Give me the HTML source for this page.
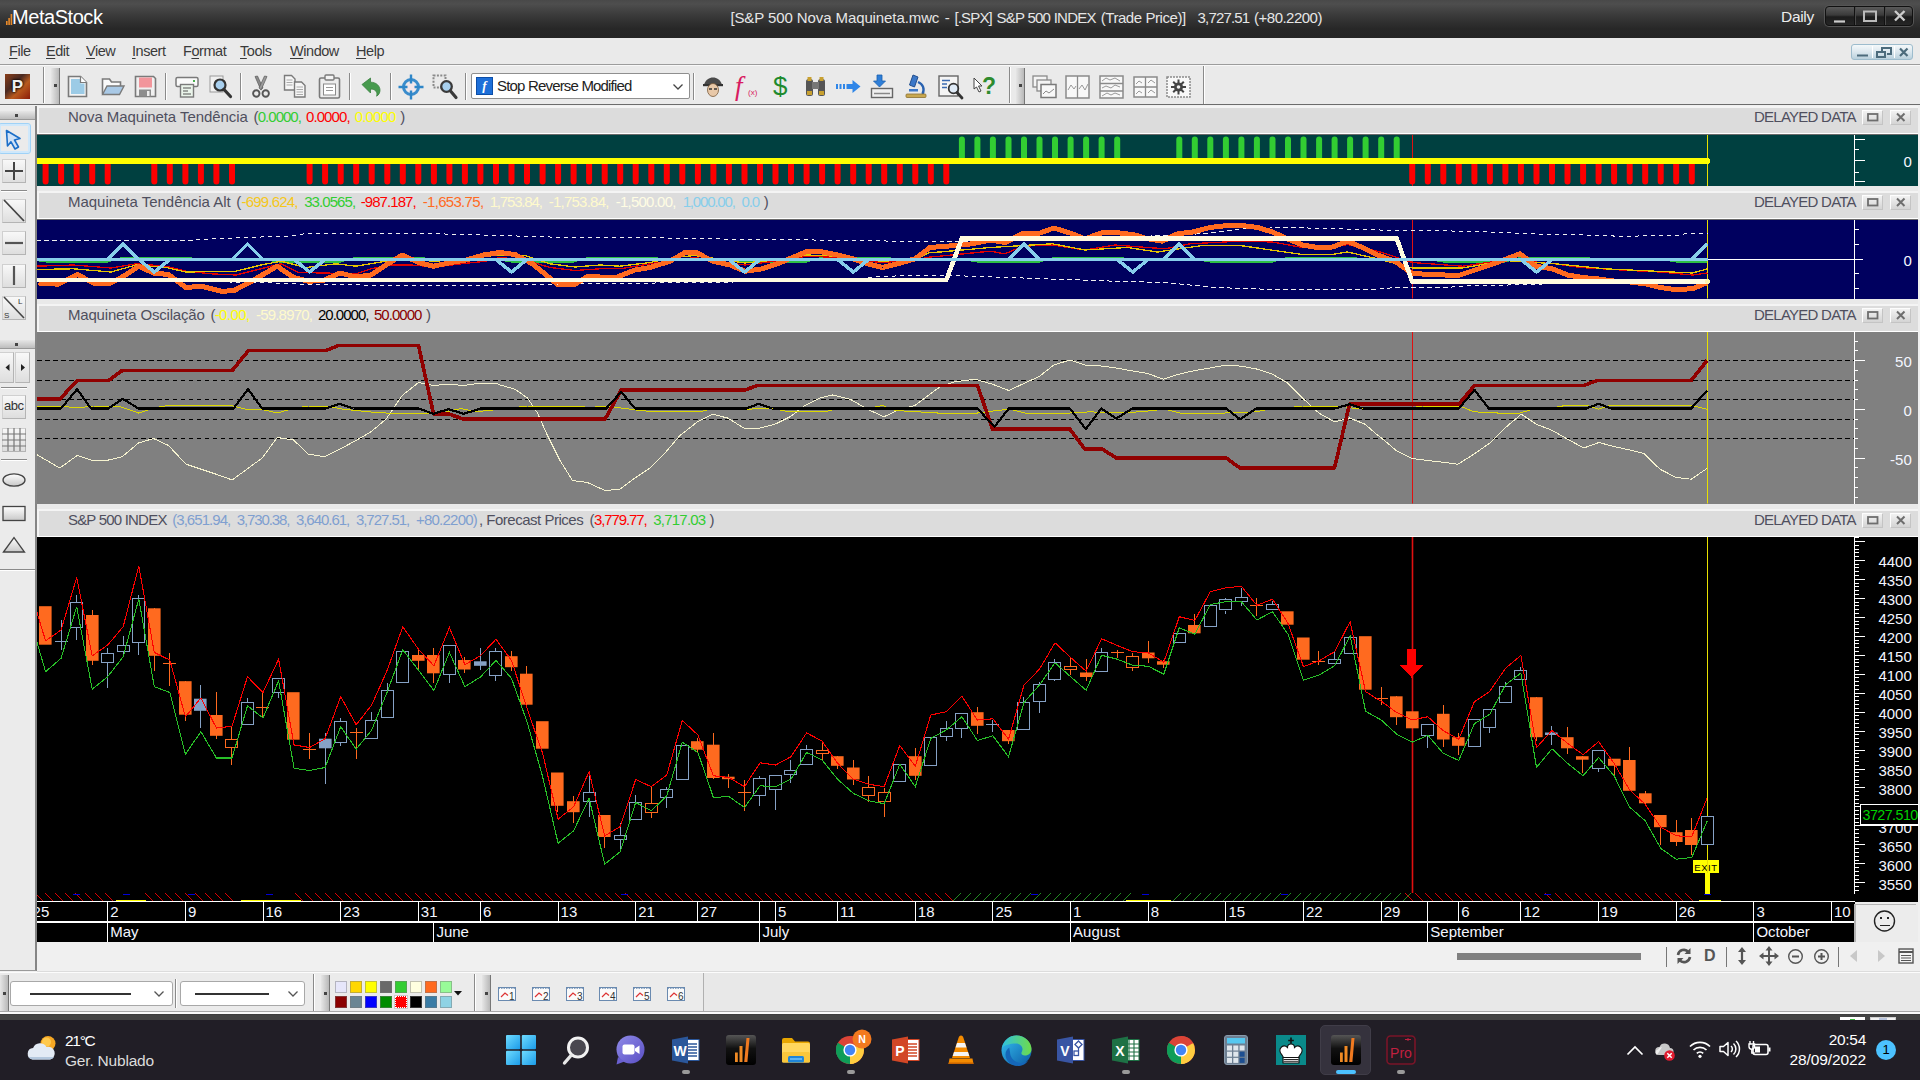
<!DOCTYPE html><html><head><meta charset="utf-8"><title>MetaStock</title><style>

*{box-sizing:border-box}
html,body{margin:0;padding:0}
body{width:1920px;height:1080px;overflow:hidden;position:relative;background:#f0f0f0;font-family:"Liberation Sans",sans-serif;font-size:15px;color:#333}
.abs{position:absolute}
svg{position:absolute;overflow:visible}
.ui{font-family:"Liberation Sans",sans-serif}

#title{left:0;top:0;width:1920px;height:38px;background:linear-gradient(#494949 0,#4e4e4e 4px,#434343 10px,#333 20px,#272727 29px,#252525 38px);color:#eee}
#title .logo{left:12px;top:4px;font-size:20px;color:#fff;letter-spacing:-0.45px;line-height:26px}
#title .cap{left:730px;top:8px;font-size:15px;color:#e6e6e6;white-space:pre;line-height:18px;letter-spacing:-0.35px}
#title .daily{left:1781px;top:8px;font-size:15.5px;color:#ececec;line-height:18px;letter-spacing:-0.3px}
#wbtn{left:1825px;top:6px;width:88px;height:20px;border-radius:4px;border:1px solid #111;background:linear-gradient(#5a5a5a,#3a3a3a 45%,#1c1c1c 55%,#262626);box-shadow:0 0 0 1px #555}
#menu{left:0;top:38px;width:1920px;height:27px;background:#eaeaea;border-bottom:1px solid #9c9c9c}
#menu span{position:absolute;top:4px;font-size:14.5px;color:#3a3a3a;line-height:18px;letter-spacing:-0.45px}
#menu u{text-decoration-thickness:1px;text-underline-offset:2px}
#mdi{left:1851px;top:44px;width:62px;height:16px;border:1px solid #9dbccd;border-radius:3px;background:linear-gradient(#f4f8fa,#dbe7ee 50%,#b9d0dc)}
#tb{left:0;top:65px;width:1920px;height:40px;background:#eaeaea;border-top:1px solid #f8f8f8;border-bottom:1px solid #6c6c6c}
.sep{position:absolute;width:1px;background:#8a8a8a;box-shadow:1px 0 0 #fff}
.grip{position:absolute;width:9px;background:linear-gradient(90deg,#e6e6e6,#b8b8b8);border-right:1px solid #777}
.grip i{position:absolute;left:3px;top:50%;width:3px;height:3px;margin-top:-2px;background:#444}
#combo{left:471px;top:73px;width:219px;height:26px;background:#fff;border:1px solid #8f8f8f;border-radius:2px}
#combo span{position:absolute;left:25px;top:3px;font-size:15px;color:#222;line-height:18px;white-space:pre}
#left{left:0;top:106px;width:37px;height:865px;background:#ebebeb;border-right:2px solid #858585;border-bottom:1px solid #9a9a9a}
.lb{position:absolute;left:2px;width:24px;height:24px;border:1px solid #d0d0d0;border-right-color:#b4b4b4;border-bottom-color:#b4b4b4;background:linear-gradient(#f8f8f8,#dedede)}
.hgrip{position:absolute;left:0;width:35px;height:9px;background:linear-gradient(#e6e6e6,#bdbdbd);border-bottom:1px solid #999}
.hgrip i{position:absolute;left:15px;top:3px;width:3px;height:3px;background:#444}
.hsep{position:absolute;left:1px;width:26px;height:1px;background:#8a8a8a;box-shadow:0 1px 0 #fff}
#zoomrow{left:37px;top:942px;width:1883px;height:30px;background:#f0f0f0;border-bottom:1px solid #dcdcdc}
#btb{left:0;top:972px;width:1920px;height:39px;background:#e8e8e8;border-top:1px solid #fcfcfc}
#btbL{left:0;top:973px;width:704px;height:38px;background:#ebebeb;border-right:1px solid #b0b0b0}
.dd{position:absolute;height:25px;background:#fff;border:1px solid #a8a8a8;border-radius:3px}
.dd b{position:absolute;top:11px;height:1.5px;background:#333}
#strip{left:0;top:1011px;width:1920px;height:9px;background:linear-gradient(#a8a8a8 0,#a8a8a8 1px,#fafafa 1px,#fafafa 3px,#3a3a3a 3px,#444 4.500px,#444 9px)}

.ph{position:absolute;left:37px;width:1881px;height:28px;background:#dcdcdc;border-top:2px solid #f4f4f4;border-left:2px solid #f4f4f4;border-bottom:1px solid #fff}
.ph .t{position:absolute;left:0px;top:0px;font-size:15px;line-height:18px;color:#4f4f5e;white-space:pre;letter-spacing:-0.66px}
.ph .t b{font-weight:normal;letter-spacing:-0.05px}
.ph .dd{position:absolute;left:1715px;top:0px;font-size:15px;line-height:18px;color:#4f4f5e;white-space:pre;letter-spacing:-0.75px;border:0;background:none;height:auto}
.pb{position:absolute;top:2px;width:21px;height:15px;border:1px solid #fdfdfd;border-right-color:#c4c4c4;border-bottom-color:#c4c4c4;background:linear-gradient(#f2f2f2,#d4d4d4)}
.spl{position:absolute;left:37px;width:1881px;background:#e9e9e9}
.axl{font-family:"Liberation Sans",sans-serif;font-size:15px;fill:#f4f6ff}

#task{left:0;top:1020px;width:1920px;height:60px;background:#211e26}
#task .w1{left:65px;top:12px;font-size:15.500px;color:#fff;line-height:18px;letter-spacing:-1.300px}
#task .w2{left:65px;top:32px;font-size:15.5px;color:#dcdcdc;line-height:18px;letter-spacing:-0.2px}
#task .clk{right:54px;top:10.500px;font-size:15.5px;color:#fff;line-height:18px;text-align:right;letter-spacing:-0.3px}
#task .dat{right:54px;top:30.500px;font-size:15.500px;color:#fff;line-height:18px;text-align:right;letter-spacing:-0.1px}
.pill{position:absolute;top:50px;width:8px;height:3.500px;border-radius:2px;background:#9a9a9a}

</style></head><body>
<div id="title" class="abs"><svg style="left:6px;top:13px" width="7" height="12"><rect x="0" y="8" width="1.600" height="4" fill="#e88a2a"/><rect x="2.300" y="5" width="1.600" height="7" fill="#e88a2a"/><rect x="4.600" y="1" width="1.600" height="11" fill="#e88a2a"/></svg><div class="abs logo">MetaStock</div><div class="abs cap" style="left:0"><span style="position:absolute;left:730.40px;top:0.5px;color:#e6e6e6;letter-spacing:-0.097px;white-space:pre">[S&amp;P 500 Nova Maquineta.mwc</span><span style="position:absolute;left:944.70px;top:0.5px;color:#e6e6e6;letter-spacing:0.004px;white-space:pre">-</span><span style="position:absolute;left:954.40px;top:0.5px;color:#e6e6e6;letter-spacing:-0.836px;white-space:pre">[.SPX]</span><span style="position:absolute;left:996.40px;top:0.5px;color:#e6e6e6;letter-spacing:-0.727px;white-space:pre">S&amp;P 500 INDEX</span><span style="position:absolute;left:1100.70px;top:0.5px;color:#e6e6e6;letter-spacing:-0.438px;white-space:pre">(Trade Price)]</span><span style="position:absolute;left:1197.60px;top:0.5px;color:#e6e6e6;letter-spacing:-0.849px;white-space:pre">3,727.51</span><span style="position:absolute;left:1254.10px;top:0.5px;color:#e6e6e6;letter-spacing:-0.517px;white-space:pre">(+80.2200)</span></div><div class="abs daily">Daily</div><div id="wbtn" class="abs"><svg style="left:0;top:0" width="86" height="18"><path d="M28.500 0v18M58.500 0v18" stroke="#111"/><path d="M29.500 0v18M59.500 0v18" stroke="#4a4a4a"/><path d="M8 14.500h11" stroke="#ccc" stroke-width="2.200"/><rect x="38" y="4.500" width="12" height="9.500" fill="none" stroke="#bbb" stroke-width="2"/><path d="M69 4l9.500 9.500M78.500 4L69 13.500" stroke="#ccc" stroke-width="2.400"/></svg></div></div><div id="menu" class="abs"><span style="left:9px"><u>F</u>ile</span><span style="left:46px"><u>E</u>dit</span><span style="left:86px"><u>V</u>iew</span><span style="left:132px"><u>I</u>nsert</span><span style="left:183px">F<u>o</u>rmat</span><span style="left:240px"><u>T</u>ools</span><span style="left:290px"><u>W</u>indow</span><span style="left:356px"><u>H</u>elp</span></div><div id="mdi" class="abs"><svg style="left:0;top:0" width="60" height="14"><path d="M20.500 1v12M42.500 1v12" stroke="#fff"/><path d="M5 10.500h11" stroke="#4c6b7c" stroke-width="2"/><rect x="25" y="7" width="8" height="5" fill="none" stroke="#4c6b7c" stroke-width="2"/><path d="M30 6V3h9v6h-4" fill="none" stroke="#4c6b7c" stroke-width="2"/><path d="M48 3.500l7.500 7.500M55.500 3.500L48 11" stroke="#4c6b7c" stroke-width="2.200"/></svg></div><div id="tb" class="abs"></div><div class="abs" style="left:5px;top:74px;width:25px;height:25px;background:linear-gradient(135deg,#8a3d18,#4a2a22 38%,#b85a1e 62%,#8a1c0a);"></div><div class="abs" style="left:5px;top:74px;width:25px;height:25px;color:#eee;font-weight:bold;font-size:17px;line-height:25px;text-align:center;text-shadow:0 0 3px #000,0 0 2px #000">P</div><div class="sep" style="left:43px;top:67px;height:36px"></div><div class="grip" style="left:51px;top:68px;height:36px"><i></i></div><svg style="left:67px;top:75px" width="21" height="23" viewBox="0 0 21 23"><path d="M1.5 1.5h12l6 6v14h-18z" fill="#f4f4f4" stroke="#7a7a7a" stroke-width="1.6"/><path d="M4 4h9.5v4.5h4V19H4z" fill="#9ccbe6"/><path d="M13.5 1.5v6h6" fill="#fff" stroke="#7a7a7a" stroke-width="1.2"/></svg><svg style="left:101px;top:77px" width="24" height="19" viewBox="0 0 24 19"><path d="M1.5 17V2h7l2 3h9v4" fill="#fafafa" stroke="#7a7a7a" stroke-width="1.6"/><path d="M1.5 17.5L6 9h17l-4.5 8.5z" fill="#a9c9e6" stroke="#7a7a7a" stroke-width="1.4"/></svg><svg style="left:134px;top:75px" width="23" height="23" viewBox="0 0 23 23"><path d="M1.5 1.5h18l2 2v18h-20z" fill="#f0f0f0" stroke="#7a7a7a" stroke-width="1.6"/><rect x="5" y="2.5" width="13" height="10" fill="#f2959b"/><rect x="5" y="14.5" width="12" height="7" fill="#8d8d8d"/><rect x="13" y="16" width="2.5" height="5" fill="#eee"/></svg><div class="sep" style="left:165px;top:73px;height:27px"></div><svg style="left:175px;top:76px" width="24" height="22" viewBox="0 0 24 22"><rect x="1" y="1.5" width="22" height="9" rx="1.5" fill="#fafafa" stroke="#7a7a7a" stroke-width="1.5"/><rect x="5.5" y="8.5" width="13" height="12.5" fill="#eaf4ea" stroke="#7a7a7a" stroke-width="1.4"/><path d="M8 12h8M8 15h5M8 18h8" stroke="#555" stroke-width="1.1"/><rect x="18" y="4" width="2" height="2" fill="#4caf50"/></svg><svg style="left:209px;top:75px" width="24" height="24" viewBox="0 0 24 24"><rect x="1" y="1" width="13" height="16" fill="#f0f0f0" stroke="#9a9a9a"/><circle cx="11" cy="10" r="5.5" fill="#a8cfee" stroke="#333" stroke-width="2.2"/><path d="M15 14.5l6.5 7" stroke="#333" stroke-width="3.2" stroke-linecap="round"/></svg><div class="sep" style="left:240px;top:73px;height:27px"></div><svg style="left:252px;top:75px" width="18" height="24" viewBox="0 0 18 24"><path d="M3 1.500l2.500-.5L11 13l-2.200 1.800z" fill="#8a8a8a" stroke="#5a5a5a" stroke-width="0.700"/><path d="M15 1.500l-2.500-.5L7 13l2.200 1.800z" fill="#9a9a9a" stroke="#5a5a5a" stroke-width="0.700"/><circle cx="4.300" cy="18.500" r="3.200" fill="none" stroke="#555" stroke-width="1.900"/><circle cx="13.700" cy="18.500" r="3.200" fill="none" stroke="#555" stroke-width="1.900"/></svg><svg style="left:283px;top:74px" width="24" height="25" viewBox="0 0 24 25"><path d="M1.500 1.500h7l3.500 3.500v11h-10.500z" fill="#f6f6f6" stroke="#7a7a7a" stroke-width="1.400"/><path d="M3.500 6h6M3.500 8.500h6M3.500 11h6" stroke="#aaa" stroke-width="1"/><path d="M11.500 8h7l3.500 3.500v11.500h-10.500z" fill="#f6f6f6" stroke="#7a7a7a" stroke-width="1.400"/><path d="M13.500 13h6.500M13.500 15.500h6.500M13.500 18h6.500M13.500 20.500h6.500" stroke="#aaa" stroke-width="1"/></svg><svg style="left:318px;top:74px" width="23" height="25" viewBox="0 0 23 25"><rect x="1.5" y="4" width="20" height="20" rx="1.5" fill="#ededed" stroke="#7a7a7a" stroke-width="1.6"/><rect x="7" y="1" width="9" height="5" rx="1" fill="#f4f4f4" stroke="#7a7a7a" stroke-width="1.4"/><rect x="5.5" y="10" width="12" height="11" fill="#fff" stroke="#8a8a8a"/><path d="M8 13.5h7M8 16.5h7" stroke="#999"/></svg><div class="sep" style="left:349px;top:73px;height:27px"></div><svg style="left:360px;top:77px" width="22" height="20" viewBox="0 0 22 20"><path d="M2 7.5L10.5 1v4.2c6 0 9.5 4 9.5 8 0 2.5-1.2 4.8-3.4 6 1.3-3.8-1-7.2-6.1-7.2V16z" fill="#479a4e" stroke="#3a8040" stroke-width="0.8"/></svg><div class="sep" style="left:390px;top:73px;height:27px"></div><svg style="left:398px;top:74px" width="26" height="26" viewBox="0 0 26 26"><circle cx="13" cy="13" r="5" fill="#f3e6ea"/><circle cx="13" cy="13" r="7.500" fill="none" stroke="#3a8ccc" stroke-width="3"/><path d="M13 0.500v9M13 16.500v9M0.500 13h9M16.500 13h9" stroke="#2f86c8" stroke-width="2.400"/></svg><svg style="left:432px;top:74px" width="27" height="27" viewBox="0 0 27 27"><rect x="1.500" y="1.500" width="12" height="12" fill="none" stroke="#8a8a8a" stroke-width="2" stroke-dasharray="2 1.400"/><circle cx="14.500" cy="12.500" r="5.300" fill="#a8d0ee" stroke="#3a3a3a" stroke-width="2.300"/><path d="M18.500 17l5.500 6.500" stroke="#3a3a3a" stroke-width="3.200" stroke-linecap="round"/></svg><div class="sep" style="left:465px;top:73px;height:27px"></div><div id="combo" class="abs"><div class="abs" style="left:4px;top:3px;width:17px;height:18px;background:#1d6fd8;border:1px solid #0d4ea8;color:#fff;font:italic bold 13px 'Liberation Serif',serif;text-align:center;line-height:16px">f</div><span style="letter-spacing:-0.82px">Stop Reverse Modified</span></div><svg style="left:673px;top:84px" width="10" height="6"><path d="M0.5 0.5 L5 5 L9.5 0.5" fill="none" stroke="#444" stroke-width="1.3"/></svg><div class="sep" style="left:693px;top:73px;height:27px"></div><svg style="left:703px;top:76px" width="20" height="22" viewBox="0 0 20 22"><path d="M1 8.500c2-5 5-7 9-7s7 2 9 7z" fill="#4a4a4a"/><rect x="0" y="8" width="20" height="2.200" fill="#333"/><ellipse cx="10" cy="14" rx="5.500" ry="6.500" fill="#e8c8a8" stroke="#7a5a3a" stroke-width="0.800"/><path d="M6 13h3M11 13h3" stroke="#333" stroke-width="1.400"/></svg><div class="abs" style="left:735px;top:71px;font:italic 27px 'Liberation Serif',serif;color:#d81b60;line-height:30px">f</div><div class="abs" style="left:748px;top:88px;font:8px 'Liberation Sans',sans-serif;color:#d81b60;line-height:9px">(x)</div><div class="abs" style="left:773px;top:72px;font:26px 'Liberation Sans',sans-serif;color:#1e8a2e;line-height:28px">$</div><svg style="left:804px;top:76px" width="23" height="22" viewBox="0 0 23 22"><rect x="2" y="3" width="7" height="17" rx="2.500" fill="#555"/><rect x="14" y="3" width="7" height="17" rx="2.500" fill="#555"/><rect x="8" y="6" width="7" height="7" fill="#777"/><rect x="3.500" y="1" width="4" height="4" fill="#c8a030"/><rect x="15.500" y="1" width="4" height="4" fill="#c8a030"/><rect x="3" y="15" width="5" height="4" fill="#c8a030"/><rect x="15" y="15" width="5" height="4" fill="#c8a030"/></svg><svg style="left:836px;top:79px" width="25" height="15" viewBox="0 0 25 15"><path d="M0 5h2v5H0zM3.500 5h2v5h-2zM7 5h2v5H7zM10.500 5h6V1l8 6.500-8 6.500v-4h-6z" fill="#2f86e8"/></svg><svg style="left:870px;top:74px" width="24" height="25" viewBox="0 0 24 25"><path d="M7 1h5v6h3.500L9.500 13 3.500 7H7z" fill="#2f7fd8" stroke="#1a5fae" stroke-width="0.800"/><rect x="1.500" y="14.500" width="21" height="9" fill="#efefef" stroke="#666" stroke-width="1.400"/><path d="M4 19.500h16" stroke="#888" stroke-width="1.500"/></svg><svg style="left:904px;top:74px" width="24" height="25" viewBox="0 0 24 25"><path d="M9 1l5 2-3.500 10-5-2z" fill="#3c78c8" stroke="#234f8e"/><path d="M14 8c5 2 7 7 4.500 12" fill="none" stroke="#2a62b0" stroke-width="2.400"/><rect x="2" y="20" width="20" height="3.500" rx="1" fill="#c8a850" stroke="#8a7030" stroke-width="0.800"/><rect x="5" y="15" width="9" height="2.500" fill="#3c78c8"/></svg><svg style="left:938px;top:74px" width="26" height="26" viewBox="0 0 26 26"><rect x="1" y="2" width="19" height="20" fill="#f4f4f4" stroke="#666" stroke-width="1.400"/><path d="M4 6.500h8M4 10h5M4 13.500h5" stroke="#3a6ab0" stroke-width="1.300"/><circle cx="15.500" cy="14.500" r="4.800" fill="#dfeaf6" stroke="#333" stroke-width="1.800"/><path d="M19 18.500l5 5.500" stroke="#333" stroke-width="2.800" stroke-linecap="round"/></svg><svg style="left:973px;top:77px" width="12" height="16" viewBox="0 0 12 16"><path d="M1 1l8 8H5.500l2.500 5-2 1-2.500-5L1 12z" fill="#fff" stroke="#444" stroke-width="1"/></svg><div class="abs" style="left:982px;top:72px;font:bold 23px 'Liberation Sans',sans-serif;color:#2e8b2e;line-height:28px">?</div><div class="sep" style="left:1009px;top:67px;height:36px"></div><div class="grip" style="left:1016px;top:68px;height:36px"><i></i></div><svg style="left:1032px;top:75px" width="26" height="25" viewBox="0 0 26 25"><rect x="1" y="1" width="14" height="11" fill="#f4f4f4" stroke="#8a8a8a" stroke-width="1.300"/><rect x="5" y="5" width="14" height="11" fill="#f4f4f4" stroke="#8a8a8a" stroke-width="1.300"/><rect x="9" y="9.500" width="15" height="13" fill="#f8f8f8" stroke="#7a7a7a" stroke-width="1.500"/><path d="M11 19l3-3 3 2 5-4" fill="none" stroke="#8a8a8a"/></svg><svg style="left:1065px;top:75px" width="25" height="25" viewBox="0 0 25 25"><rect x="1" y="1" width="23" height="22" fill="#f8f8f8" stroke="#8a8a8a" stroke-width="1.500"/><path d="M12.500 1v22" stroke="#8a8a8a" stroke-width="1.300"/><path d="M3 15l3-5 3 4 2-3M14 14l3-4 3 5 3-6" fill="none" stroke="#999"/></svg><svg style="left:1099px;top:75px" width="25" height="25" viewBox="0 0 25 25"><rect x="1" y="1" width="23" height="22" fill="#f8f8f8" stroke="#8a8a8a" stroke-width="1.500"/><path d="M1 8.500h23M1 16h23" stroke="#8a8a8a" stroke-width="1.300"/><path d="M3 6l4-3 4 2 5-2 5 3M3 13l4-2 5 2 4-3 5 2M3 21l5-3 4 2 4-2 5 2" fill="none" stroke="#999"/></svg><svg style="left:1133px;top:76px" width="25" height="23" viewBox="0 0 25 23"><rect x="1" y="1" width="23" height="20" fill="#f8f8f8" stroke="#8a8a8a" stroke-width="1.500"/><path d="M12.500 1v20M1 11h23" stroke="#8a8a8a" stroke-width="1.300"/><path d="M3 8l3-3 3 2M15 7l3-3 4 3M3 18l3-3 3 2M15 17l3-3 4 3" fill="none" stroke="#999"/></svg><svg style="left:1166px;top:76px" width="25" height="23" viewBox="0 0 25 23"><rect x="1" y="1" width="23" height="20" fill="#f8f8f8" stroke="#8a8a8a" stroke-width="1.500" stroke-dasharray="2 1"/><circle cx="12.500" cy="11" r="4.500" fill="#444"/><path d="M12.500 3.500v15M5 11h15M7.200 5.700l10.600 10.600M17.800 5.700L7.200 16.300" stroke="#444" stroke-width="2"/><circle cx="12.500" cy="11" r="1.800" fill="#f0f0f0"/></svg><div class="sep" style="left:1203px;top:66px;height:38px"></div>
<div id="left" class="abs"><div class="hgrip" style="top:5px"><i></i></div><div class="abs" style="left:-2px;top:17px;width:33px;height:31px;border:1px solid #9fd2f7;border-radius:3px;background:#ebebeb;box-shadow:inset 0 0 0 2px #cfe8fb"></div><svg style="left:5px;top:23px" width="20" height="22"><path d="M1.500 1.500l13.500 8-5.500 1.500 4 7-3.500 2-4-7.200L2.500 17z" fill="#cfe2f8" stroke="#1b6ec8" stroke-width="1.600" stroke-linejoin="round"/></svg><div class="lb" style="top:53px"><svg style="left:-2px;top:-2px" width="26" height="25"><path d="M13 4v18M4 13h18" stroke="#444" stroke-width="2"/></svg></div><div class="hsep" style="top:84px"></div><div class="lb" style="top:93px"><svg style="left:-2px;top:-2px" width="26" height="25"><path d="M3 2l20 21" stroke="#444" stroke-width="1.800"/></svg></div><div class="lb" style="top:125px"><svg style="left:-2px;top:-2px" width="26" height="25"><path d="M4 13h18" stroke="#555" stroke-width="2.200"/></svg></div><div class="lb" style="top:158px"><svg style="left:-2px;top:-2px" width="26" height="25"><path d="M13 3v19" stroke="#555" stroke-width="2.200"/></svg></div><div class="lb" style="top:190px"><svg style="left:-2px;top:-2px" width="26" height="25"><path d="M3 2l20 21" stroke="#444" stroke-width="1.600"/><text x="17" y="9" font-size="8" fill="#333" font-family="Liberation Sans,sans-serif">L</text><text x="3" y="23" font-size="8" fill="#333" font-family="Liberation Sans,sans-serif">S</text></svg></div><div class="hgrip" style="top:234px"><i></i></div><div class="lb" style="left:-1px;top:246px;width:15px;height:31px"><svg style="left:0;top:0" width="15" height="30"><path d="M9.500 11v7l-4-3.500z" fill="#222"/></svg></div><div class="lb" style="left:15px;top:246px;width:15px;height:31px"><svg style="left:0;top:0" width="14" height="30"><path d="M5 11v7l4-3.500z" fill="#222"/></svg></div><div class="hsep" style="top:281px"></div><div class="lb" style="top:289px"><div class="abs" style="left:1px;top:2px;font-size:13px;color:#333;letter-spacing:-0.5px;line-height:16px">abc</div></div><div class="lb" style="top:322px"><svg style="left:-2px;top:-2px" width="26" height="25"><path d="M1 7h24M1 13h24M1 19h24M7 1v23M13 1v23M19 1v23" stroke="#777" stroke-width="1.200"/></svg></div><div class="hsep" style="top:353px"></div><svg style="left:2px;top:366px" width="26" height="16"><defs><linearGradient id="eg" x1="0" y1="0" x2="0" y2="1"><stop offset="0" stop-color="#fff"/><stop offset="1" stop-color="#c8c8c8"/></linearGradient></defs><ellipse cx="12" cy="8" rx="11" ry="6.200" fill="url(#eg)" stroke="#444" stroke-width="1.300"/></svg><svg style="left:2px;top:399px" width="26" height="18"><rect x="1" y="1.500" width="22" height="14" fill="url(#eg)" stroke="#444" stroke-width="1.300"/></svg><svg style="left:2px;top:430px" width="26" height="18"><path d="M1.500 16L12 1.500 22.500 16z" fill="url(#eg)" stroke="#444" stroke-width="1.300"/></svg><div class="hsep" style="top:463px;left:0;width:35px"></div></div>
<div class="ph" style="top:106px"><div class="t"><span style="position:absolute;left:28.95px;top:0px;color:#4f4f5e;letter-spacing:-0.074px;white-space:pre">Nova Maquineta Tendência</span><span style="position:absolute;left:214.45px;top:0px;color:#4f4f5e;letter-spacing:-1.246px;white-space:pre">(</span><span style="position:absolute;left:218.70px;top:0px;color:#32cd32;letter-spacing:-0.971px;white-space:pre">0.0000,</span><span style="position:absolute;left:266.95px;top:0px;color:#ff0000;letter-spacing:-0.900px;white-space:pre">0.0000,</span><span style="position:absolute;left:315.70px;top:0px;color:#ffff00;letter-spacing:-0.855px;white-space:pre">0.0000</span><span style="position:absolute;left:361.20px;top:0px;color:#4f4f5e;letter-spacing:-0.996px;white-space:pre">)</span></div><div class="dd">DELAYED DATA</div><div class="pb" style="left:1823px"><svg style="left:0;top:0" width="19" height="13"><rect x="5" y="3" width="9.500" height="6.500" fill="none" stroke="#6e6e6e" stroke-width="1.800"/></svg></div><div class="pb" style="left:1851px"><svg style="left:0;top:0" width="19" height="13"><path d="M6 2.500l7.500 7.500M13.500 2.500L6 10" stroke="#6e6e6e" stroke-width="2"/></svg></div></div><div class="spl" style="top:186px;height:5px"></div><div class="ph" style="top:191px"><div class="t"><span style="position:absolute;left:28.95px;top:0px;color:#4f4f5e;letter-spacing:-0.019px;white-space:pre">Maquineta Tendência Alt</span><span style="position:absolute;left:197.20px;top:0px;color:#4f4f5e;letter-spacing:-1.196px;white-space:pre">(</span><span style="position:absolute;left:202.60px;top:0px;color:#f5c71a;letter-spacing:-0.810px;white-space:pre">-699.624,</span><span style="position:absolute;left:265.20px;top:0px;color:#32cd32;letter-spacing:-0.924px;white-space:pre">33.0565,</span><span style="position:absolute;left:321.70px;top:0px;color:#ff0000;letter-spacing:-0.932px;white-space:pre">-987.187,</span><span style="position:absolute;left:383.70px;top:0px;color:#ff6a1f;letter-spacing:-0.685px;white-space:pre">-1,653.75,</span><span style="position:absolute;left:450.70px;top:0px;color:#fffacd;letter-spacing:-1.173px;white-space:pre">1,753.84,</span><span style="position:absolute;left:509.70px;top:0px;color:#fffacd;letter-spacing:-0.755px;white-space:pre">-1,753.84,</span><span style="position:absolute;left:576.70px;top:0px;color:#fffde4;letter-spacing:-0.755px;white-space:pre">-1,500.00,</span><span style="position:absolute;left:643.70px;top:0px;color:#87ceeb;letter-spacing:-1.173px;white-space:pre">1,000.00,</span><span style="position:absolute;left:702.40px;top:0px;color:#87ceeb;letter-spacing:-1.084px;white-space:pre">0.0</span><span style="position:absolute;left:724.70px;top:0px;color:#4f4f5e;letter-spacing:-0.296px;white-space:pre">)</span></div><div class="dd">DELAYED DATA</div><div class="pb" style="left:1823px"><svg style="left:0;top:0" width="19" height="13"><rect x="5" y="3" width="9.500" height="6.500" fill="none" stroke="#6e6e6e" stroke-width="1.800"/></svg></div><div class="pb" style="left:1851px"><svg style="left:0;top:0" width="19" height="13"><path d="M6 2.500l7.500 7.500M13.500 2.500L6 10" stroke="#6e6e6e" stroke-width="2"/></svg></div></div><div class="spl" style="top:298px;height:6px"></div><div class="ph" style="top:304px"><div class="t"><span style="position:absolute;left:28.95px;top:0px;color:#4f4f5e;letter-spacing:-0.175px;white-space:pre">Maquineta Oscilação</span><span style="position:absolute;left:171.45px;top:0px;color:#4f4f5e;letter-spacing:-1.496px;white-space:pre">(</span><span style="position:absolute;left:175.70px;top:0px;color:#ffff00;letter-spacing:-0.560px;white-space:pre">-0.00,</span><span style="position:absolute;left:216.95px;top:0px;color:#fffacd;letter-spacing:-0.793px;white-space:pre">-59.8970,</span><span style="position:absolute;left:278.95px;top:0px;color:#000;letter-spacing:-0.986px;white-space:pre">20.0000,</span><span style="position:absolute;left:334.95px;top:0px;color:#8b0000;letter-spacing:-0.960px;white-space:pre">50.0000</span><span style="position:absolute;left:386.95px;top:0px;color:#4f4f5e;letter-spacing:-1.246px;white-space:pre">)</span></div><div class="dd">DELAYED DATA</div><div class="pb" style="left:1823px"><svg style="left:0;top:0" width="19" height="13"><rect x="5" y="3" width="9.500" height="6.500" fill="none" stroke="#6e6e6e" stroke-width="1.800"/></svg></div><div class="pb" style="left:1851px"><svg style="left:0;top:0" width="19" height="13"><path d="M6 2.500l7.500 7.500M13.500 2.500L6 10" stroke="#6e6e6e" stroke-width="2"/></svg></div></div><div class="spl" style="top:503px;height:6px"></div><div class="ph" style="top:509px"><div class="t"><span style="position:absolute;left:28.95px;top:0px;color:#4f4f5e;letter-spacing:-0.792px;white-space:pre">S&amp;P 500 INDEX</span><span style="position:absolute;left:133.20px;top:0px;color:#7f9fd0;letter-spacing:-0.945px;white-space:pre">(3,651.94,</span><span style="position:absolute;left:197.70px;top:0px;color:#7f9fd0;letter-spacing:-1.117px;white-space:pre">3,730.38,</span><span style="position:absolute;left:256.90px;top:0px;color:#7f9fd0;letter-spacing:-1.029px;white-space:pre">3,640.61,</span><span style="position:absolute;left:316.90px;top:0px;color:#7f9fd0;letter-spacing:-1.029px;white-space:pre">3,727.51,</span><span style="position:absolute;left:376.90px;top:0px;color:#7f9fd0;letter-spacing:-0.753px;white-space:pre">+80.2200)</span><span style="position:absolute;left:439.90px;top:0px;color:#4f4f5e;letter-spacing:-0.484px;white-space:pre">, Forecast Prices</span><span style="position:absolute;left:550.60px;top:0px;color:#4f4f5e;letter-spacing:-1.296px;white-space:pre">(</span><span style="position:absolute;left:555.10px;top:0px;color:#ff0000;letter-spacing:-1.117px;white-space:pre">3,779.77,</span><span style="position:absolute;left:614.30px;top:0px;color:#32cd32;letter-spacing:-0.786px;white-space:pre">3,717.03</span><span style="position:absolute;left:670.60px;top:0px;color:#4f4f5e;letter-spacing:-0.496px;white-space:pre">)</span></div><div class="dd">DELAYED DATA</div><div class="pb" style="left:1823px"><svg style="left:0;top:0" width="19" height="13"><rect x="5" y="3" width="9.500" height="6.500" fill="none" stroke="#6e6e6e" stroke-width="1.800"/></svg></div><div class="pb" style="left:1851px"><svg style="left:0;top:0" width="19" height="13"><path d="M6 2.500l7.500 7.500M13.500 2.500L6 10" stroke="#6e6e6e" stroke-width="2"/></svg></div></div><svg style="left:0;top:0" width="1920" height="1080" viewBox="0 0 1920 1080" shape-rendering="crispEdges"><defs><clipPath id="cp2"><rect x="37" y="220" width="1880.5" height="78.500"/></clipPath><clipPath id="cp3"><rect x="37" y="332" width="1880.5" height="171.500"/></clipPath><clipPath id="cp4"><rect x="37" y="537" width="1880.5" height="365"/></clipPath><clipPath id="cp5"><rect x="37" y="902" width="1817.5" height="40"/></clipPath></defs><rect x="37" y="134" width="1880.5" height="1" fill="#6a6a6a"/><rect x="37" y="135" width="1880.5" height="51" fill="#004040"/><path d="M1412.500 135V186" stroke="#e01010" stroke-width="1.3" shape-rendering="crispEdges"/><path d="M1707.500 135V186" stroke="#e8e000" stroke-width="1.600"/><path d="M45.6 163V181.500" stroke="#ff0000" stroke-width="6" stroke-linecap="round" shape-rendering="geometricPrecision"/><path d="M61.1 163V181.500" stroke="#ff0000" stroke-width="6" stroke-linecap="round" shape-rendering="geometricPrecision"/><path d="M76.7 163V181.500" stroke="#ff0000" stroke-width="6" stroke-linecap="round" shape-rendering="geometricPrecision"/><path d="M92.2 163V181.500" stroke="#ff0000" stroke-width="6" stroke-linecap="round" shape-rendering="geometricPrecision"/><path d="M107.7 163V181.500" stroke="#ff0000" stroke-width="6" stroke-linecap="round" shape-rendering="geometricPrecision"/><path d="M154.3 163V181.500" stroke="#ff0000" stroke-width="6" stroke-linecap="round" shape-rendering="geometricPrecision"/><path d="M169.8 163V181.500" stroke="#ff0000" stroke-width="6" stroke-linecap="round" shape-rendering="geometricPrecision"/><path d="M185.4 163V181.500" stroke="#ff0000" stroke-width="6" stroke-linecap="round" shape-rendering="geometricPrecision"/><path d="M200.9 163V181.500" stroke="#ff0000" stroke-width="6" stroke-linecap="round" shape-rendering="geometricPrecision"/><path d="M216.4 163V181.500" stroke="#ff0000" stroke-width="6" stroke-linecap="round" shape-rendering="geometricPrecision"/><path d="M232.0 163V181.500" stroke="#ff0000" stroke-width="6" stroke-linecap="round" shape-rendering="geometricPrecision"/><path d="M309.6 163V181.500" stroke="#ff0000" stroke-width="6" stroke-linecap="round" shape-rendering="geometricPrecision"/><path d="M325.1 163V181.500" stroke="#ff0000" stroke-width="6" stroke-linecap="round" shape-rendering="geometricPrecision"/><path d="M340.7 163V181.500" stroke="#ff0000" stroke-width="6" stroke-linecap="round" shape-rendering="geometricPrecision"/><path d="M356.2 163V181.500" stroke="#ff0000" stroke-width="6" stroke-linecap="round" shape-rendering="geometricPrecision"/><path d="M371.7 163V181.500" stroke="#ff0000" stroke-width="6" stroke-linecap="round" shape-rendering="geometricPrecision"/><path d="M387.3 163V181.500" stroke="#ff0000" stroke-width="6" stroke-linecap="round" shape-rendering="geometricPrecision"/><path d="M402.8 163V181.500" stroke="#ff0000" stroke-width="6" stroke-linecap="round" shape-rendering="geometricPrecision"/><path d="M418.3 163V181.500" stroke="#ff0000" stroke-width="6" stroke-linecap="round" shape-rendering="geometricPrecision"/><path d="M433.9 163V181.500" stroke="#ff0000" stroke-width="6" stroke-linecap="round" shape-rendering="geometricPrecision"/><path d="M449.4 163V181.500" stroke="#ff0000" stroke-width="6" stroke-linecap="round" shape-rendering="geometricPrecision"/><path d="M464.9 163V181.500" stroke="#ff0000" stroke-width="6" stroke-linecap="round" shape-rendering="geometricPrecision"/><path d="M480.4 163V181.500" stroke="#ff0000" stroke-width="6" stroke-linecap="round" shape-rendering="geometricPrecision"/><path d="M496.0 163V181.500" stroke="#ff0000" stroke-width="6" stroke-linecap="round" shape-rendering="geometricPrecision"/><path d="M511.5 163V181.500" stroke="#ff0000" stroke-width="6" stroke-linecap="round" shape-rendering="geometricPrecision"/><path d="M527.0 163V181.500" stroke="#ff0000" stroke-width="6" stroke-linecap="round" shape-rendering="geometricPrecision"/><path d="M542.6 163V181.500" stroke="#ff0000" stroke-width="6" stroke-linecap="round" shape-rendering="geometricPrecision"/><path d="M558.1 163V181.500" stroke="#ff0000" stroke-width="6" stroke-linecap="round" shape-rendering="geometricPrecision"/><path d="M573.6 163V181.500" stroke="#ff0000" stroke-width="6" stroke-linecap="round" shape-rendering="geometricPrecision"/><path d="M589.1 163V181.500" stroke="#ff0000" stroke-width="6" stroke-linecap="round" shape-rendering="geometricPrecision"/><path d="M604.7 163V181.500" stroke="#ff0000" stroke-width="6" stroke-linecap="round" shape-rendering="geometricPrecision"/><path d="M620.2 163V181.500" stroke="#ff0000" stroke-width="6" stroke-linecap="round" shape-rendering="geometricPrecision"/><path d="M635.7 163V181.500" stroke="#ff0000" stroke-width="6" stroke-linecap="round" shape-rendering="geometricPrecision"/><path d="M651.3 163V181.500" stroke="#ff0000" stroke-width="6" stroke-linecap="round" shape-rendering="geometricPrecision"/><path d="M666.8 163V181.500" stroke="#ff0000" stroke-width="6" stroke-linecap="round" shape-rendering="geometricPrecision"/><path d="M682.3 163V181.500" stroke="#ff0000" stroke-width="6" stroke-linecap="round" shape-rendering="geometricPrecision"/><path d="M697.9 163V181.500" stroke="#ff0000" stroke-width="6" stroke-linecap="round" shape-rendering="geometricPrecision"/><path d="M713.4 163V181.500" stroke="#ff0000" stroke-width="6" stroke-linecap="round" shape-rendering="geometricPrecision"/><path d="M728.9 163V181.500" stroke="#ff0000" stroke-width="6" stroke-linecap="round" shape-rendering="geometricPrecision"/><path d="M744.5 163V181.500" stroke="#ff0000" stroke-width="6" stroke-linecap="round" shape-rendering="geometricPrecision"/><path d="M760.0 163V181.500" stroke="#ff0000" stroke-width="6" stroke-linecap="round" shape-rendering="geometricPrecision"/><path d="M775.5 163V181.500" stroke="#ff0000" stroke-width="6" stroke-linecap="round" shape-rendering="geometricPrecision"/><path d="M791.0 163V181.500" stroke="#ff0000" stroke-width="6" stroke-linecap="round" shape-rendering="geometricPrecision"/><path d="M806.6 163V181.500" stroke="#ff0000" stroke-width="6" stroke-linecap="round" shape-rendering="geometricPrecision"/><path d="M822.1 163V181.500" stroke="#ff0000" stroke-width="6" stroke-linecap="round" shape-rendering="geometricPrecision"/><path d="M837.6 163V181.500" stroke="#ff0000" stroke-width="6" stroke-linecap="round" shape-rendering="geometricPrecision"/><path d="M853.2 163V181.500" stroke="#ff0000" stroke-width="6" stroke-linecap="round" shape-rendering="geometricPrecision"/><path d="M868.7 163V181.500" stroke="#ff0000" stroke-width="6" stroke-linecap="round" shape-rendering="geometricPrecision"/><path d="M884.2 163V181.500" stroke="#ff0000" stroke-width="6" stroke-linecap="round" shape-rendering="geometricPrecision"/><path d="M899.8 163V181.500" stroke="#ff0000" stroke-width="6" stroke-linecap="round" shape-rendering="geometricPrecision"/><path d="M915.3 163V181.500" stroke="#ff0000" stroke-width="6" stroke-linecap="round" shape-rendering="geometricPrecision"/><path d="M930.8 163V181.500" stroke="#ff0000" stroke-width="6" stroke-linecap="round" shape-rendering="geometricPrecision"/><path d="M946.3 163V181.500" stroke="#ff0000" stroke-width="6" stroke-linecap="round" shape-rendering="geometricPrecision"/><path d="M1412.2 163V181.500" stroke="#ff0000" stroke-width="6" stroke-linecap="round" shape-rendering="geometricPrecision"/><path d="M1427.8 163V181.500" stroke="#ff0000" stroke-width="6" stroke-linecap="round" shape-rendering="geometricPrecision"/><path d="M1443.3 163V181.500" stroke="#ff0000" stroke-width="6" stroke-linecap="round" shape-rendering="geometricPrecision"/><path d="M1458.8 163V181.500" stroke="#ff0000" stroke-width="6" stroke-linecap="round" shape-rendering="geometricPrecision"/><path d="M1474.4 163V181.500" stroke="#ff0000" stroke-width="6" stroke-linecap="round" shape-rendering="geometricPrecision"/><path d="M1489.9 163V181.500" stroke="#ff0000" stroke-width="6" stroke-linecap="round" shape-rendering="geometricPrecision"/><path d="M1505.4 163V181.500" stroke="#ff0000" stroke-width="6" stroke-linecap="round" shape-rendering="geometricPrecision"/><path d="M1520.9 163V181.500" stroke="#ff0000" stroke-width="6" stroke-linecap="round" shape-rendering="geometricPrecision"/><path d="M1536.5 163V181.500" stroke="#ff0000" stroke-width="6" stroke-linecap="round" shape-rendering="geometricPrecision"/><path d="M1552.0 163V181.500" stroke="#ff0000" stroke-width="6" stroke-linecap="round" shape-rendering="geometricPrecision"/><path d="M1567.5 163V181.500" stroke="#ff0000" stroke-width="6" stroke-linecap="round" shape-rendering="geometricPrecision"/><path d="M1583.1 163V181.500" stroke="#ff0000" stroke-width="6" stroke-linecap="round" shape-rendering="geometricPrecision"/><path d="M1598.6 163V181.500" stroke="#ff0000" stroke-width="6" stroke-linecap="round" shape-rendering="geometricPrecision"/><path d="M1614.1 163V181.500" stroke="#ff0000" stroke-width="6" stroke-linecap="round" shape-rendering="geometricPrecision"/><path d="M1629.7 163V181.500" stroke="#ff0000" stroke-width="6" stroke-linecap="round" shape-rendering="geometricPrecision"/><path d="M1645.2 163V181.500" stroke="#ff0000" stroke-width="6" stroke-linecap="round" shape-rendering="geometricPrecision"/><path d="M1660.7 163V181.500" stroke="#ff0000" stroke-width="6" stroke-linecap="round" shape-rendering="geometricPrecision"/><path d="M1676.2 163V181.500" stroke="#ff0000" stroke-width="6" stroke-linecap="round" shape-rendering="geometricPrecision"/><path d="M1691.8 163V181.500" stroke="#ff0000" stroke-width="6" stroke-linecap="round" shape-rendering="geometricPrecision"/><path d="M961.9 139.500V158" stroke="#32cd32" stroke-width="6" stroke-linecap="round" shape-rendering="geometricPrecision"/><path d="M977.4 139.500V158" stroke="#32cd32" stroke-width="6" stroke-linecap="round" shape-rendering="geometricPrecision"/><path d="M992.9 139.500V158" stroke="#32cd32" stroke-width="6" stroke-linecap="round" shape-rendering="geometricPrecision"/><path d="M1008.5 139.500V158" stroke="#32cd32" stroke-width="6" stroke-linecap="round" shape-rendering="geometricPrecision"/><path d="M1024.0 139.500V158" stroke="#32cd32" stroke-width="6" stroke-linecap="round" shape-rendering="geometricPrecision"/><path d="M1039.5 139.500V158" stroke="#32cd32" stroke-width="6" stroke-linecap="round" shape-rendering="geometricPrecision"/><path d="M1055.0 139.500V158" stroke="#32cd32" stroke-width="6" stroke-linecap="round" shape-rendering="geometricPrecision"/><path d="M1070.6 139.500V158" stroke="#32cd32" stroke-width="6" stroke-linecap="round" shape-rendering="geometricPrecision"/><path d="M1086.1 139.500V158" stroke="#32cd32" stroke-width="6" stroke-linecap="round" shape-rendering="geometricPrecision"/><path d="M1101.6 139.500V158" stroke="#32cd32" stroke-width="6" stroke-linecap="round" shape-rendering="geometricPrecision"/><path d="M1117.2 139.500V158" stroke="#32cd32" stroke-width="6" stroke-linecap="round" shape-rendering="geometricPrecision"/><path d="M1179.3 139.500V158" stroke="#32cd32" stroke-width="6" stroke-linecap="round" shape-rendering="geometricPrecision"/><path d="M1194.8 139.500V158" stroke="#32cd32" stroke-width="6" stroke-linecap="round" shape-rendering="geometricPrecision"/><path d="M1210.3 139.500V158" stroke="#32cd32" stroke-width="6" stroke-linecap="round" shape-rendering="geometricPrecision"/><path d="M1225.9 139.500V158" stroke="#32cd32" stroke-width="6" stroke-linecap="round" shape-rendering="geometricPrecision"/><path d="M1241.4 139.500V158" stroke="#32cd32" stroke-width="6" stroke-linecap="round" shape-rendering="geometricPrecision"/><path d="M1256.9 139.500V158" stroke="#32cd32" stroke-width="6" stroke-linecap="round" shape-rendering="geometricPrecision"/><path d="M1272.5 139.500V158" stroke="#32cd32" stroke-width="6" stroke-linecap="round" shape-rendering="geometricPrecision"/><path d="M1288.0 139.500V158" stroke="#32cd32" stroke-width="6" stroke-linecap="round" shape-rendering="geometricPrecision"/><path d="M1303.5 139.500V158" stroke="#32cd32" stroke-width="6" stroke-linecap="round" shape-rendering="geometricPrecision"/><path d="M1319.1 139.500V158" stroke="#32cd32" stroke-width="6" stroke-linecap="round" shape-rendering="geometricPrecision"/><path d="M1334.6 139.500V158" stroke="#32cd32" stroke-width="6" stroke-linecap="round" shape-rendering="geometricPrecision"/><path d="M1350.1 139.500V158" stroke="#32cd32" stroke-width="6" stroke-linecap="round" shape-rendering="geometricPrecision"/><path d="M1365.6 139.500V158" stroke="#32cd32" stroke-width="6" stroke-linecap="round" shape-rendering="geometricPrecision"/><path d="M1381.2 139.500V158" stroke="#32cd32" stroke-width="6" stroke-linecap="round" shape-rendering="geometricPrecision"/><path d="M1396.7 139.500V158" stroke="#32cd32" stroke-width="6" stroke-linecap="round" shape-rendering="geometricPrecision"/><path d="M37 161H1707.500" stroke="#ffff00" stroke-width="5.500"/><circle cx="1707.500" cy="161" r="2.750" fill="#ffff00"/><path d="M1854.5 135V186" stroke="#fff" stroke-width="1.300"/><path d="M1854.5 139.5h10.5M1854.5 160.5h10.5M1854.5 181.5h10.5" stroke="#fff" stroke-width="1"/><path d="M1854.5 149.5h4.5M1854.5 172.5h4.5" stroke="#fff" stroke-width="1"/><text class="axl" x="1911.8" y="166.5" text-anchor="end">0</text><rect x="37" y="219" width="1880.5" height="1" fill="#6a6a6a"/><rect x="37" y="220" width="1880.5" height="78.5" fill="#00005f"/><g clip-path="url(#cp2)"><path d="M1412.500 220V298.5" stroke="#e01010" stroke-width="1.3" shape-rendering="crispEdges"/><path d="M1707.500 220V298.5" stroke="#e8e000" stroke-width="1.600"/><polyline points="36.0,240.5 186.0,240.5 211.0,238.8 261.0,237.0 296.0,235.8 303.5,233.8 323.5,233.0 411.0,233.0 461.0,234.5 500.0,235.5 550.0,237.0 565.0,237.0 625.0,237.0 700.0,238.8 775.0,239.5 875.0,240.8 940.0,242.0 1047.5,240.0 1190.0,234.5 1215.0,232.5 1240.0,228.8 1290.0,227.5 1380.0,230.0 1390.0,230.0 1412.5,230.5 1467.5,231.2 1530.0,233.8 1605.0,235.5 1630.0,237.0 1642.5,235.5 1680.0,235.0 1685.0,233.8 1707.5,233.8" fill="none" stroke="#f0f0f0" stroke-width="1" stroke-dasharray="4.500 3.500"/><polyline points="36.0,282.0 136.0,280.5 261.0,282.5 311.0,284.5 411.0,285.5 500.0,285.0 850.0,280.5 877.5,276.2 940.0,275.5 950.0,275.5 1115.0,281.2 1165.0,282.5 1215.0,287.5 1290.0,290.0 1380.0,289.0 1390.0,288.0 1450.0,287.5 1455.0,286.2 1530.0,284.5 1580.0,282.5 1630.0,282.5 1707.5,283.8" fill="none" stroke="#f0f0f0" stroke-width="1" stroke-dasharray="4.500 3.500"/><polyline points="30.1,259.5 45.6,261.9 61.1,261.9 76.7,261.9 92.2,261.9 107.7,261.9 123.2,257.1 138.8,257.1 154.3,257.1 169.8,257.1 185.4,257.1 200.9,259.5 216.4,259.5 232.0,259.5 247.5,259.5 263.0,259.5 278.6,261.9 294.1,261.9 309.6,261.9 325.1,261.9 340.7,261.9 356.2,257.1 371.7,257.1 387.3,257.1 402.8,257.1 418.3,257.1 433.9,259.5 449.4,259.5 464.9,259.5 480.4,259.5 496.0,259.5 511.5,261.9 527.0,261.9 542.6,261.9 558.1,261.9 573.6,261.9 589.1,257.1 604.7,257.1 620.2,257.1 635.7,257.1 651.3,257.1 666.8,259.5 682.3,259.5 697.9,259.5 713.4,259.5 728.9,259.5 744.5,261.9 760.0,261.9 775.5,261.9 791.0,261.9 806.6,261.9 822.1,257.1 837.6,257.1 853.2,257.1 868.7,257.1 884.2,257.1 899.8,259.5 915.3,259.5 930.8,259.5 946.3,259.5 961.9,259.5 977.4,261.9 992.9,261.9 1008.5,261.9 1024.0,261.9 1039.5,261.9 1055.0,257.1 1070.6,257.1 1086.1,257.1 1101.6,257.1 1117.2,257.1 1132.7,259.5 1148.2,259.5 1163.8,259.5 1179.3,259.5 1194.8,259.5 1210.3,261.9 1225.9,261.9 1241.4,261.9 1256.9,261.9 1272.5,261.9 1288.0,257.1 1303.5,257.1 1319.1,257.1 1334.6,257.1 1350.1,257.1 1365.6,259.5 1381.2,259.5 1396.7,259.5 1412.2,259.5 1427.8,259.5 1443.3,261.9 1458.8,261.9 1474.4,261.9 1489.9,261.9 1505.4,261.9 1520.9,257.1 1536.5,257.1 1552.0,257.1 1567.5,257.1 1583.1,257.1 1598.6,259.5 1614.1,259.5 1629.7,259.5 1645.2,259.5 1660.7,259.5 1676.2,261.9 1691.8,261.9 1707.3,261.9" fill="none" stroke="#2dbf45" stroke-width="1.2" /><polyline points="36.0,266.2 73.5,265.0 111.0,268.0 136.0,263.8 166.0,266.2 186.0,271.2 211.0,273.8 236.0,275.0 261.0,268.8 281.0,263.8 298.5,272.5 323.5,273.0 356.0,273.8 371.0,268.8 391.0,265.0 411.0,265.0 436.0,267.0 461.0,263.8 486.0,261.2 500.0,257.5 525.0,260.0 550.0,267.5 575.0,270.5 600.0,268.8 620.0,268.8 650.0,263.8 675.0,260.0 695.0,257.5 725.0,262.5 745.0,265.0 775.0,261.2 807.5,256.2 837.5,257.5 867.5,261.2 882.5,262.5 915.0,260.0 930.0,257.0 940.0,256.2 990.0,251.2 1005.0,253.8 1022.5,246.2 1052.5,245.0 1085.0,250.0 1115.0,245.0 1165.0,248.8 1190.0,243.8 1240.0,241.2 1272.5,242.0 1302.5,247.5 1332.5,247.5 1347.5,244.5 1377.5,251.2 1412.5,262.5 1462.5,266.2 1505.0,260.0 1535.0,262.0 1555.0,263.8 1580.0,267.5 1630.0,270.5 1660.0,272.0 1692.5,275.0 1707.5,273.0" fill="none" stroke="#e00000" stroke-width="1.3" /><polyline points="36.0,269.5 73.5,268.8 111.0,272.0 136.0,265.0 166.0,267.5 186.0,272.0 236.0,271.2 261.0,265.0 281.0,261.2 306.0,267.5 336.0,263.8 356.0,266.2 386.0,261.2 411.0,260.0 436.0,261.2 461.0,258.8 500.0,255.0 525.0,255.5 550.0,263.8 575.0,267.0 600.0,265.0 620.0,266.2 650.0,262.5 675.0,257.5 695.0,255.5 725.0,260.0 745.0,263.0 775.0,260.0 807.5,255.0 837.5,256.2 867.5,260.0 882.5,261.2 915.0,259.5 930.0,252.5 940.0,252.0 990.0,247.5 1052.5,243.8 1085.0,250.0 1127.5,247.5 1157.5,252.0 1202.5,245.5 1240.0,245.5 1302.5,254.5 1332.5,254.5 1347.5,252.0 1377.5,258.8 1412.5,268.0 1462.5,268.0 1505.0,260.5 1555.0,263.8 1605.0,268.8 1655.0,271.2 1692.5,273.0 1707.5,268.8" fill="none" stroke="#e6c400" stroke-width="1.3" /><polyline points="38.5,283.0 58.5,284.2 77.2,274.5 93.5,283.0 111.0,283.0 123.5,276.2 138.5,266.2 153.5,273.0 168.5,274.5 186.0,287.5 201.0,286.2 221.0,291.2 233.5,290.8 248.5,283.0 262.2,275.0 277.2,266.2 293.5,277.5 308.5,281.2 323.5,280.5 339.8,273.0 356.0,277.0 371.0,275.0 386.0,265.0 402.2,255.0 418.5,262.5 433.5,266.2 448.5,263.0 466.0,260.0 483.5,255.0 500.0,252.5 515.0,254.5 532.5,263.8 547.5,276.2 557.5,284.5 575.0,284.5 587.5,276.2 600.0,277.0 617.5,277.0 635.0,270.0 650.0,267.5 670.0,261.2 685.0,252.5 697.5,253.0 712.5,261.2 730.0,265.0 745.0,271.2 762.5,268.8 777.5,263.8 792.5,257.5 807.5,251.2 822.5,252.0 837.5,255.0 852.5,258.8 867.5,263.8 882.5,267.5 897.5,263.8 915.0,258.8 930.0,247.5 938.8,246.8 955.0,245.5 972.5,243.8 990.0,240.0 1005.0,242.5 1022.5,233.8 1040.0,233.0 1053.8,228.0 1070.0,233.0 1085.0,238.8 1102.5,232.5 1120.0,233.0 1135.0,235.0 1147.5,238.8 1162.5,241.2 1177.5,233.8 1192.5,232.0 1210.0,227.5 1227.5,225.5 1242.5,225.5 1257.5,227.5 1272.5,232.0 1287.5,238.8 1302.5,245.0 1317.5,247.5 1332.5,247.0 1347.5,241.2 1362.5,247.5 1377.5,255.0 1395.0,261.2 1412.5,273.8 1430.0,274.2 1445.0,275.0 1460.0,275.0 1475.0,270.0 1490.0,265.0 1505.0,259.5 1520.0,253.8 1536.2,266.2 1552.5,268.8 1567.5,275.0 1582.5,277.5 1597.5,278.8 1615.0,281.2 1630.0,282.0 1645.0,283.8 1660.0,287.5 1675.0,289.5 1692.5,288.8 1707.5,282.5" fill="none" stroke="#ff6a1f" stroke-width="5" stroke-linejoin="round"/><polyline points="32.0,280.0 946.3,280.0 961.9,238.5 1396.7,238.5 1412.2,281.5 1707.5,281.5" fill="none" stroke="#fffbe0" stroke-width="4.5" stroke-linejoin="miter"/><circle cx="1707.500" cy="281.500" r="2.400" fill="#fff7b0"/><polyline points="32.0,259.5 107.7,259.5 123.2,244.0 138.8,259.5 138.8,259.5 154.3,272.0 169.8,259.5 232.0,259.5 247.5,244.0 263.0,259.5 294.1,259.5 309.6,272.0 325.1,259.5 496.0,259.5 511.5,272.0 527.0,259.5 728.9,259.5 744.5,272.0 760.0,259.5 837.6,259.5 853.2,272.0 868.7,259.5 1008.5,259.5 1024.0,244.0 1039.5,259.5 1117.2,259.5 1132.7,272.0 1148.2,259.5 1163.8,259.5 1179.3,244.0 1194.8,259.5 1520.9,259.5 1536.5,272.0 1552.0,259.5 1691.8,259.5 1707.3,243.5" fill="none" stroke="#87ceeb" stroke-width="3.4" stroke-linejoin="miter"/><path d="M37 259.500H1707.500" stroke="#87ceeb" stroke-width="3.400"/></g><path d="M1707.500 259.500H1862.5" stroke="#fff" stroke-width="1.200"/><path d="M1854.5 220V298.5" stroke="#fff" stroke-width="1.300"/><path d="M1854.5 229.5h4.5M1854.5 244.5h4.5M1854.5 273.5h4.5M1854.5 288.5h4.5" stroke="#fff" stroke-width="1"/><text class="axl" x="1911.8" y="265.6" text-anchor="end">0</text><rect x="37" y="332" width="1880.5" height="171.5" fill="#808080"/><g clip-path="url(#cp3)"><path d="M37 360.6H1854.5" stroke="#000" stroke-width="1.200" stroke-dasharray="4.500 3.500"/><path d="M37 380.1H1854.5" stroke="#000" stroke-width="1.200" stroke-dasharray="4.500 3.500"/><path d="M37 399.6H1854.5" stroke="#000" stroke-width="1.200" stroke-dasharray="4.500 3.500"/><path d="M37 419.1H1854.5" stroke="#000" stroke-width="1.200" stroke-dasharray="4.500 3.500"/><path d="M37 438.6H1854.5" stroke="#000" stroke-width="1.200" stroke-dasharray="4.500 3.500"/><path d="M1412.500 332V503.5" stroke="#e01010" stroke-width="1.3" shape-rendering="crispEdges"/><path d="M1707.500 332V503.5" stroke="#e8e000" stroke-width="1.600"/><polyline points="36.0,454.2 59.8,468.0 77.2,455.5 91.0,460.0 108.5,460.0 122.2,456.8 138.5,443.0 153.5,438.5 168.5,445.5 186.0,464.2 201.0,469.2 216.0,474.2 232.2,480.0 248.5,468.0 262.2,458.0 277.2,437.5 293.5,440.0 308.5,454.2 324.8,456.8 339.8,449.2 356.0,440.5 371.0,431.8 386.0,419.2 402.2,395.5 418.5,382.5 433.5,385.5 448.5,384.2 463.5,385.5 481.0,383.0 496.0,383.0 500.0,385.0 515.0,389.2 527.5,398.0 537.5,413.0 547.5,435.5 560.0,460.5 572.5,480.5 587.5,482.5 605.0,490.5 620.0,489.2 635.0,478.0 650.0,468.0 665.0,453.0 680.0,435.5 697.5,421.8 712.5,414.2 727.5,418.0 743.8,428.0 760.0,428.0 775.0,424.2 790.0,416.8 805.0,405.5 820.0,398.0 832.5,395.0 850.0,399.2 867.5,409.2 883.8,416.8 900.0,409.2 915.0,405.5 930.0,394.2 940.0,386.8 955.0,381.8 975.0,379.2 992.5,384.2 1008.8,390.5 1023.8,383.5 1038.8,376.8 1053.8,365.0 1070.0,360.0 1085.0,365.0 1101.2,366.0 1116.2,368.0 1132.5,371.0 1147.5,373.5 1163.2,379.2 1178.8,374.2 1195.0,370.5 1210.0,368.0 1226.2,365.0 1241.2,366.2 1257.5,369.2 1272.5,374.2 1287.5,383.0 1302.5,398.0 1318.8,413.0 1334.5,421.8 1349.5,418.0 1365.0,424.2 1375.0,433.0 1380.0,436.8 1396.2,450.5 1412.0,458.5 1427.5,460.5 1442.5,462.2 1458.0,464.2 1473.8,454.2 1490.0,443.0 1505.0,428.0 1521.2,414.2 1536.2,424.2 1552.5,430.5 1567.5,439.2 1583.8,448.0 1598.8,442.5 1615.0,446.8 1630.0,450.0 1643.8,453.5 1660.0,469.2 1676.2,477.5 1691.2,479.2 1707.0,468.5" fill="none" stroke="#f6f3d0" stroke-width="1" /><polyline points="36.0,406.0 61.0,406.0 76.0,408.0 93.5,406.0 118.5,406.0 138.5,413.0 156.0,407.5 168.5,405.5 231.0,405.5 246.0,409.2 261.0,409.2 277.2,413.0 293.5,408.5 308.5,406.0 326.0,406.0 343.5,409.2 368.5,411.8 386.0,413.0 421.0,413.0 436.0,414.2 461.0,408.5 476.0,411.8 500.0,409.2 515.0,407.5 527.5,406.0 575.0,406.0 590.0,407.5 605.0,406.0 617.5,407.5 640.0,410.5 655.0,411.8 700.0,411.8 710.0,409.2 750.0,409.2 760.0,408.0 775.0,409.2 790.0,411.8 825.0,411.8 835.0,409.2 870.0,408.0 882.5,405.5 895.0,410.5 937.5,413.0 977.5,413.0 997.5,410.5 1010.0,409.2 1025.0,413.0 1070.0,413.0 1090.0,411.8 1115.0,413.0 1140.0,411.8 1165.0,409.2 1180.0,413.0 1225.0,413.0 1255.0,411.8 1270.0,409.2 1290.0,407.5 1302.5,406.0 1340.0,406.0 1355.0,408.5 1375.0,407.5 1380.0,407.5 1412.5,407.5 1422.5,406.0 1460.0,406.0 1473.8,411.8 1497.5,413.0 1520.0,413.0 1530.0,410.0 1555.0,407.5 1565.0,405.5 1587.5,405.5 1598.8,409.2 1610.0,405.5 1692.5,405.5 1707.0,409.2" fill="none" stroke="#dcd800" stroke-width="1" /><polyline points="32.0,399.2 36.0,399.2 59.8,399.2 77.2,380.5 108.5,380.5 122.2,370.5 232.2,370.5 248.5,350.5 326.0,350.5 338.5,345.5 418.5,345.5 433.5,413.8 448.5,413.8 463.5,419.2 605.0,419.2 621.2,390.0 745.0,390.0 757.5,385.5 977.5,385.5 992.5,429.2 1070.0,429.2 1085.0,449.2 1102.5,449.2 1116.2,458.0 1226.2,458.0 1240.0,468.0 1334.5,468.0 1349.5,404.2 1458.8,404.2 1474.5,385.5 1583.8,385.5 1597.0,380.5 1691.2,380.5 1707.0,360.5" fill="none" stroke="#900000" stroke-width="3.6" stroke-linejoin="round"/><polyline points="32.0,408.5 36.0,408.5 61.0,408.5 77.2,389.2 91.0,408.5 108.5,408.5 122.8,398.8 138.5,408.5 233.5,408.5 248.0,389.2 262.2,408.5 326.0,408.5 339.8,403.8 353.5,408.5 418.5,408.5 433.5,413.8 448.5,409.2 463.5,413.8 481.0,408.5 606.2,408.5 621.2,391.8 635.0,408.5 746.2,408.5 758.8,403.8 772.5,408.5 977.5,408.5 994.5,426.8 1008.8,408.5 1070.0,408.5 1085.8,429.2 1101.2,408.5 1116.2,418.5 1132.5,408.5 1226.2,408.5 1240.0,419.2 1256.2,408.5 1335.0,408.5 1349.5,404.2 1362.5,408.5 1458.8,408.5 1474.5,390.0 1488.8,408.5 1586.2,408.5 1598.8,403.8 1611.2,408.5 1691.2,408.5 1707.0,390.5" fill="none" stroke="#000" stroke-width="2.2" stroke-linejoin="round"/></g><path d="M1854.5 332V503.5" stroke="#fff" stroke-width="1.300"/><path d="M1854.5 497.5h3.5M1854.5 487.5h3.5M1854.5 477.5h3.5M1854.5 467.5h3.5M1854.5 458.5h3.5M1854.5 448.5h3.5M1854.5 438.5h3.5M1854.5 428.5h3.5M1854.5 419.5h3.5M1854.5 409.5h3.5M1854.5 399.5h3.5M1854.5 389.5h3.5M1854.5 380.5h3.5M1854.5 370.5h3.5M1854.5 360.5h3.5M1854.5 350.5h3.5M1854.5 341.5h3.5" stroke="#fff" stroke-width="1"/><path d="M1854.5 360.5h10.5M1854.5 409.5h10.5M1854.5 458.5h10.5" stroke="#fff" stroke-width="1"/><text class="axl" x="1911.8" y="367.0" text-anchor="end">50</text><text class="axl" x="1911.8" y="415.6" text-anchor="end">0</text><text class="axl" x="1911.8" y="464.6" text-anchor="end">-50</text><rect x="37" y="537" width="1880.5" height="405" fill="#000"/><g clip-path="url(#cp4)"><g stroke-width="1.300"><path d="M15.5 893.500L23.0 901M25.5 893.500L33.0 901M35.5 893.500L43.0 901M45.5 893.500L53.0 901M55.5 893.500L63.0 901M65.5 893.500L73.0 901M75.5 893.500L83.0 901M85.5 893.500L93.0 901M95.5 893.500L103.0 901M105.5 893.500L113.0 901" stroke="#e00000"/><path d="M145.5 893.500L153.0 901M155.5 893.500L163.0 901M165.5 893.500L173.0 901M175.5 893.500L183.0 901M185.5 893.500L193.0 901M195.5 893.500L203.0 901M205.5 893.500L213.0 901M215.5 893.500L223.0 901M225.5 893.500L233.0 901" stroke="#e00000"/><path d="M295.5 893.500L303.0 901M305.5 893.500L313.0 901M315.5 893.500L323.0 901M325.5 893.500L333.0 901M335.5 893.500L343.0 901M345.5 893.500L353.0 901M355.5 893.500L363.0 901M365.5 893.500L373.0 901M375.5 893.500L383.0 901M385.5 893.500L393.0 901M395.5 893.500L403.0 901M405.5 893.500L413.0 901M415.5 893.500L423.0 901M425.5 893.500L433.0 901M435.5 893.500L443.0 901M445.5 893.500L453.0 901M455.5 893.500L463.0 901M465.5 893.500L473.0 901M475.5 893.500L483.0 901M485.5 893.500L493.0 901M495.5 893.500L503.0 901M505.5 893.500L513.0 901M515.5 893.500L523.0 901M525.5 893.500L533.0 901M535.5 893.500L543.0 901M545.5 893.500L553.0 901M555.5 893.500L563.0 901M565.5 893.500L573.0 901M575.5 893.500L583.0 901M585.5 893.500L593.0 901M595.5 893.500L603.0 901M605.5 893.500L613.0 901M615.5 893.500L623.0 901M625.5 893.500L633.0 901M635.5 893.500L643.0 901M645.5 893.500L653.0 901M655.5 893.500L663.0 901M665.5 893.500L673.0 901M675.5 893.500L683.0 901M685.5 893.500L693.0 901M695.5 893.500L703.0 901M705.5 893.500L713.0 901M715.5 893.500L723.0 901M725.5 893.500L733.0 901M735.5 893.500L743.0 901M745.5 893.500L753.0 901M755.5 893.500L763.0 901M765.5 893.500L773.0 901M775.5 893.500L783.0 901M785.5 893.500L793.0 901M795.5 893.500L803.0 901M805.5 893.500L813.0 901M815.5 893.500L823.0 901M825.5 893.500L833.0 901M835.5 893.500L843.0 901M845.5 893.500L853.0 901M855.5 893.500L863.0 901M865.5 893.500L873.0 901M875.5 893.500L883.0 901M885.5 893.500L893.0 901M895.5 893.500L903.0 901M905.5 893.500L913.0 901M915.5 893.500L923.0 901M925.5 893.500L933.0 901M935.5 893.500L943.0 901M945.5 893.500L953.0 901" stroke="#e00000"/><path d="M960.5 893.500L953.0 901M970.5 893.500L963.0 901M980.5 893.500L973.0 901M990.5 893.500L983.0 901M1000.5 893.500L993.0 901M1010.5 893.500L1003.0 901M1020.5 893.500L1013.0 901M1030.5 893.500L1023.0 901M1040.5 893.500L1033.0 901M1050.5 893.500L1043.0 901M1060.5 893.500L1053.0 901M1070.5 893.500L1063.0 901M1080.5 893.500L1073.0 901M1090.5 893.500L1083.0 901M1100.5 893.500L1093.0 901M1110.5 893.500L1103.0 901M1120.5 893.500L1113.0 901M1130.5 893.500L1123.0 901" stroke="#228b22"/><path d="M1180.5 893.500L1173.0 901M1190.5 893.500L1183.0 901M1200.5 893.500L1193.0 901M1210.5 893.500L1203.0 901M1220.5 893.500L1213.0 901M1230.5 893.500L1223.0 901M1240.5 893.500L1233.0 901M1250.5 893.500L1243.0 901M1260.5 893.500L1253.0 901M1270.5 893.500L1263.0 901M1280.5 893.500L1273.0 901M1290.5 893.500L1283.0 901M1300.5 893.500L1293.0 901M1310.5 893.500L1303.0 901M1320.5 893.500L1313.0 901M1330.5 893.500L1323.0 901M1340.5 893.500L1333.0 901M1350.5 893.500L1343.0 901M1360.5 893.500L1353.0 901M1370.5 893.500L1363.0 901M1380.5 893.500L1373.0 901M1390.5 893.500L1383.0 901M1400.5 893.500L1393.0 901M1410.5 893.500L1403.0 901" stroke="#228b22"/><path d="M1405.5 893.500L1413.0 901M1415.5 893.500L1423.0 901M1425.5 893.500L1433.0 901M1435.5 893.500L1443.0 901M1445.5 893.500L1453.0 901M1455.5 893.500L1463.0 901M1465.5 893.500L1473.0 901M1475.5 893.500L1483.0 901M1485.5 893.500L1493.0 901M1495.5 893.500L1503.0 901M1505.5 893.500L1513.0 901M1515.5 893.500L1523.0 901M1525.5 893.500L1533.0 901M1535.5 893.500L1543.0 901M1545.5 893.500L1553.0 901M1555.5 893.500L1563.0 901M1565.5 893.500L1573.0 901M1575.5 893.500L1583.0 901M1585.5 893.500L1593.0 901M1595.5 893.500L1603.0 901M1605.5 893.500L1613.0 901M1615.5 893.500L1623.0 901M1625.5 893.500L1633.0 901M1635.5 893.500L1643.0 901M1645.5 893.500L1653.0 901M1655.5 893.500L1663.0 901M1665.5 893.500L1673.0 901M1675.5 893.500L1683.0 901M1685.5 893.500L1693.0 901" stroke="#e00000"/></g><rect x="116.3" y="899.500" width="29.5" height="2" fill="#ffff00"/><rect x="240.5" y="899.500" width="60.6" height="2" fill="#ffff00"/><rect x="1125.7" y="899.500" width="45.0" height="2" fill="#ffff00"/><rect x="1699" y="899.500" width="22" height="2" fill="#ffff00"/><rect x="73.2" y="893.500" width="7" height="1.500" fill="#0000d8"/><rect x="122.9" y="893.500" width="7" height="1.500" fill="#0000d8"/><rect x="188.1" y="893.500" width="7" height="1.500" fill="#0000d8"/><rect x="265.7" y="893.500" width="7" height="1.500" fill="#0000d8"/><rect x="621.4" y="893.500" width="7" height="1.500" fill="#0000d8"/><rect x="1031.4" y="893.500" width="7" height="1.500" fill="#0000d8"/><rect x="1141.6" y="893.500" width="7" height="1.500" fill="#0000d8"/><rect x="1281.4" y="893.500" width="7" height="1.500" fill="#0000d8"/><rect x="1543.9" y="893.500" width="7" height="1.500" fill="#0000d8"/><rect x="1703.8" y="893.500" width="7" height="1.500" fill="#0000d8"/><path d="M1412.500 537V893" stroke="#e01010" stroke-width="1.6" shape-rendering="geometricPrecision"/><path d="M1707.500 537V893" stroke="#e8e000" stroke-width="1.600"/><rect x="39" y="606.2" width="12.600" height="38.5" fill="#ff6a1f" shape-rendering="geometricPrecision"/><path d="M61.5 620.0V650.0" stroke="#86a2c6" stroke-width="1"/><rect x="55" y="641" width="13" height="1" fill="#86a2c6"/><path d="M76.5 595.0V602.5M76.5 628.0V640.0" stroke="#86a2c6" stroke-width="1"/><rect x="70.5" y="602.5" width="12" height="25" fill="#000" stroke="#86a2c6" stroke-width="1"/><path d="M92.5 610.0V665.0" stroke="#ff6a1f" stroke-width="1"/><rect x="86" y="615.0" width="12.600" height="45.8" fill="#ff6a1f" shape-rendering="geometricPrecision"/><path d="M107.5 647.5V652.8M107.5 663.3V687.5" stroke="#86a2c6" stroke-width="1"/><rect x="101.5" y="653.5" width="12" height="9" fill="#000" stroke="#86a2c6" stroke-width="1"/><path d="M123.5 636.0V645.3M123.5 652.0V656.7" stroke="#86a2c6" stroke-width="1"/><rect x="117.5" y="645.5" width="12" height="6" fill="#000" stroke="#86a2c6" stroke-width="1"/><path d="M138.5 595.0V597.5M138.5 643.0V655.0" stroke="#86a2c6" stroke-width="1"/><rect x="132.5" y="598.5" width="12" height="44" fill="#000" stroke="#86a2c6" stroke-width="1"/><path d="M154.5 608.3V670.8" stroke="#ff6a1f" stroke-width="1"/><rect x="148" y="608.3" width="12.600" height="47.5" fill="#ff6a1f" shape-rendering="geometricPrecision"/><path d="M169.5 652.5V685.8" stroke="#ff6a1f" stroke-width="1"/><rect x="163" y="663" width="13" height="1" fill="#ff6a1f"/><path d="M185.5 681.2V720.8" stroke="#ff6a1f" stroke-width="1"/><rect x="179" y="681.2" width="12.600" height="33.5" fill="#ff6a1f" shape-rendering="geometricPrecision"/><path d="M200.5 685.0V727.5" stroke="#86a2c6" stroke-width="1"/><rect x="194" y="698.7" width="12.600" height="12.1" fill="#86a2c6" shape-rendering="geometricPrecision"/><path d="M216.5 692.2V738.7" stroke="#ff6a1f" stroke-width="1"/><rect x="210" y="715.0" width="12.600" height="20.8" fill="#ff6a1f" shape-rendering="geometricPrecision"/><path d="M231.5 726.7V739.2M231.5 748.3V764.7" stroke="#ff6a1f" stroke-width="1"/><rect x="225.5" y="739.5" width="12" height="8" fill="#000" stroke="#ff6a1f" stroke-width="1"/><path d="M247.5 697.5V702.5" stroke="#86a2c6" stroke-width="1"/><rect x="241.5" y="702.5" width="12" height="22" fill="#000" stroke="#86a2c6" stroke-width="1"/><path d="M262.5 692.2V718.3" stroke="#ff6a1f" stroke-width="1"/><rect x="256" y="707" width="13" height="1" fill="#ff6a1f"/><path d="M278.5 693.0V698.3" stroke="#86a2c6" stroke-width="1"/><rect x="272.5" y="678.5" width="12" height="14" fill="#000" stroke="#86a2c6" stroke-width="1"/><rect x="287" y="692.2" width="12.600" height="47.5" fill="#ff6a1f" shape-rendering="geometricPrecision"/><path d="M309.5 732.5V758.7" stroke="#ff6a1f" stroke-width="1"/><rect x="303" y="749" width="13" height="1" fill="#ff6a1f"/><path d="M325.5 733.3V783.7" stroke="#86a2c6" stroke-width="1"/><rect x="319" y="738.7" width="12.600" height="9.6" fill="#86a2c6" shape-rendering="geometricPrecision"/><path d="M340.5 718.3V721.2M340.5 743.3V745.8" stroke="#86a2c6" stroke-width="1"/><rect x="334.5" y="721.5" width="12" height="21" fill="#000" stroke="#86a2c6" stroke-width="1"/><path d="M356.5 728.0V758.7" stroke="#ff6a1f" stroke-width="1"/><rect x="350" y="732" width="13" height="1" fill="#ff6a1f"/><path d="M371.5 712.0V720.3" stroke="#86a2c6" stroke-width="1"/><rect x="365.5" y="720.5" width="12" height="18" fill="#000" stroke="#86a2c6" stroke-width="1"/><path d="M387.5 683.3V690.3" stroke="#86a2c6" stroke-width="1"/><rect x="381.5" y="690.5" width="12" height="27" fill="#000" stroke="#86a2c6" stroke-width="1"/><rect x="396.5" y="651.5" width="12" height="31" fill="#000" stroke="#86a2c6" stroke-width="1"/><path d="M418.5 647.5V670.8" stroke="#ff6a1f" stroke-width="1"/><rect x="412" y="655.0" width="12.600" height="5.8" fill="#ff6a1f" shape-rendering="geometricPrecision"/><path d="M433.5 648.3V683.3" stroke="#ff6a1f" stroke-width="1"/><rect x="427" y="655.0" width="12.600" height="18.3" fill="#ff6a1f" shape-rendering="geometricPrecision"/><path d="M449.5 675.3V683.3" stroke="#86a2c6" stroke-width="1"/><rect x="443.5" y="645.5" width="12" height="29" fill="#000" stroke="#86a2c6" stroke-width="1"/><path d="M464.5 657.0V673.3" stroke="#ff6a1f" stroke-width="1"/><rect x="458" y="660.0" width="12.600" height="9.5" fill="#ff6a1f" shape-rendering="geometricPrecision"/><path d="M480.5 647.5V669.5" stroke="#86a2c6" stroke-width="1"/><rect x="474" y="661.3" width="12.600" height="4.5" fill="#86a2c6" shape-rendering="geometricPrecision"/><path d="M495.5 648.3V651.3M495.5 675.8V680.8" stroke="#86a2c6" stroke-width="1"/><rect x="489.5" y="651.5" width="12" height="24" fill="#000" stroke="#86a2c6" stroke-width="1"/><path d="M511.5 650.8V670.8" stroke="#ff6a1f" stroke-width="1"/><rect x="505" y="656.2" width="12.600" height="11.0" fill="#ff6a1f" shape-rendering="geometricPrecision"/><path d="M526.5 666.3V704.7" stroke="#ff6a1f" stroke-width="1"/><rect x="520" y="673.7" width="12.600" height="31.0" fill="#ff6a1f" shape-rendering="geometricPrecision"/><rect x="536" y="721.2" width="12.600" height="27.5" fill="#ff6a1f" shape-rendering="geometricPrecision"/><path d="M557.5 772.5V811.7" stroke="#ff6a1f" stroke-width="1"/><rect x="551" y="772.5" width="12.600" height="33.3" fill="#ff6a1f" shape-rendering="geometricPrecision"/><path d="M573.5 795.8V823.3" stroke="#ff6a1f" stroke-width="1"/><rect x="567" y="801.2" width="12.600" height="11.0" fill="#ff6a1f" shape-rendering="geometricPrecision"/><path d="M589.5 774.2V791.7M589.5 801.7V817.0" stroke="#86a2c6" stroke-width="1"/><rect x="583.5" y="792.5" width="12" height="9" fill="#000" stroke="#86a2c6" stroke-width="1"/><path d="M604.5 815.0V848.3" stroke="#ff6a1f" stroke-width="1"/><rect x="598" y="815.0" width="12.600" height="22.0" fill="#ff6a1f" shape-rendering="geometricPrecision"/><path d="M620.5 822.5V835.3M620.5 839.5V849.2" stroke="#86a2c6" stroke-width="1"/><rect x="614.5" y="835.5" width="12" height="4" fill="#000" stroke="#86a2c6" stroke-width="1"/><path d="M635.5 795.0V801.7" stroke="#86a2c6" stroke-width="1"/><rect x="629.5" y="802.5" width="12" height="17" fill="#000" stroke="#86a2c6" stroke-width="1"/><path d="M651.5 786.7V803.0M651.5 812.8V818.3" stroke="#ff6a1f" stroke-width="1"/><rect x="645.5" y="803.5" width="12" height="9" fill="#000" stroke="#ff6a1f" stroke-width="1"/><path d="M666.5 786.7V788.8M666.5 798.3V808.3" stroke="#86a2c6" stroke-width="1"/><rect x="660.5" y="789.5" width="12" height="8" fill="#000" stroke="#86a2c6" stroke-width="1"/><rect x="676.5" y="745.5" width="12" height="34" fill="#000" stroke="#86a2c6" stroke-width="1"/><path d="M697.5 737.5V753.3" stroke="#ff6a1f" stroke-width="1"/><rect x="691" y="741.2" width="12.600" height="8.5" fill="#ff6a1f" shape-rendering="geometricPrecision"/><path d="M713.5 732.5V779.2" stroke="#ff6a1f" stroke-width="1"/><rect x="707" y="744.7" width="12.600" height="33.3" fill="#ff6a1f" shape-rendering="geometricPrecision"/><path d="M728.5 773.7V787.5" stroke="#ff6a1f" stroke-width="1"/><rect x="722" y="776.7" width="12.600" height="2.5" fill="#ff6a1f" shape-rendering="geometricPrecision"/><path d="M744.5 780.0V810.8" stroke="#ff6a1f" stroke-width="1"/><rect x="738" y="792" width="13" height="1" fill="#ff6a1f"/><path d="M759.5 775.8V777.5M759.5 795.5V805.8" stroke="#86a2c6" stroke-width="1"/><rect x="753.5" y="778.5" width="12" height="17" fill="#000" stroke="#86a2c6" stroke-width="1"/><path d="M775.5 790.3V809.7" stroke="#86a2c6" stroke-width="1"/><rect x="769.5" y="775.5" width="12" height="14" fill="#000" stroke="#86a2c6" stroke-width="1"/><path d="M790.5 760.0V770.3M790.5 775.3V783.3" stroke="#86a2c6" stroke-width="1"/><rect x="784.5" y="770.5" width="12" height="4" fill="#000" stroke="#86a2c6" stroke-width="1"/><path d="M806.5 745.0V749.2" stroke="#86a2c6" stroke-width="1"/><rect x="800.5" y="749.5" width="12" height="15" fill="#000" stroke="#86a2c6" stroke-width="1"/><path d="M822.5 741.7V750.5M822.5 754.2V760.0" stroke="#ff6a1f" stroke-width="1"/><rect x="816.5" y="750.5" width="12" height="3" fill="#000" stroke="#ff6a1f" stroke-width="1"/><path d="M837.5 756.2V769.2" stroke="#ff6a1f" stroke-width="1"/><rect x="831" y="756.2" width="12.600" height="9.6" fill="#ff6a1f" shape-rendering="geometricPrecision"/><path d="M853.5 760.0V785.3" stroke="#ff6a1f" stroke-width="1"/><rect x="847" y="767.5" width="12.600" height="12.0" fill="#ff6a1f" shape-rendering="geometricPrecision"/><path d="M868.5 776.2V786.7M868.5 795.8V801.7" stroke="#ff6a1f" stroke-width="1"/><rect x="862.5" y="787.5" width="12" height="8" fill="#000" stroke="#ff6a1f" stroke-width="1"/><path d="M884.5 788.3V791.7M884.5 802.0V817.0" stroke="#ff6a1f" stroke-width="1"/><rect x="878.5" y="792.5" width="12" height="9" fill="#000" stroke="#ff6a1f" stroke-width="1"/><rect x="893.5" y="764.5" width="12" height="17" fill="#000" stroke="#86a2c6" stroke-width="1"/><path d="M915.5 748.3V780.0" stroke="#ff6a1f" stroke-width="1"/><rect x="909" y="756.2" width="12.600" height="19.6" fill="#ff6a1f" shape-rendering="geometricPrecision"/><rect x="924.5" y="737.5" width="12" height="28" fill="#000" stroke="#86a2c6" stroke-width="1"/><path d="M946.5 721.2V727.8M946.5 737.0V740.8" stroke="#86a2c6" stroke-width="1"/><rect x="940.5" y="728.5" width="12" height="8" fill="#000" stroke="#86a2c6" stroke-width="1"/><path d="M961.5 729.2V738.3" stroke="#86a2c6" stroke-width="1"/><rect x="955.5" y="713.5" width="12" height="15" fill="#000" stroke="#86a2c6" stroke-width="1"/><path d="M977.5 707.2V734.2" stroke="#ff6a1f" stroke-width="1"/><rect x="971" y="712.2" width="12.600" height="13.6" fill="#ff6a1f" shape-rendering="geometricPrecision"/><path d="M992.5 720.3V732.0" stroke="#86a2c6" stroke-width="1"/><rect x="986" y="724" width="13" height="1" fill="#86a2c6"/><path d="M1008.5 730.0V744.2" stroke="#ff6a1f" stroke-width="1"/><rect x="1002" y="730.0" width="12.600" height="11.2" fill="#ff6a1f" shape-rendering="geometricPrecision"/><path d="M1023.5 696.7V702.5" stroke="#86a2c6" stroke-width="1"/><rect x="1017.5" y="702.5" width="12" height="27" fill="#000" stroke="#86a2c6" stroke-width="1"/><path d="M1039.5 681.7V684.2M1039.5 701.7V713.3" stroke="#86a2c6" stroke-width="1"/><rect x="1033.5" y="684.5" width="12" height="17" fill="#000" stroke="#86a2c6" stroke-width="1"/><path d="M1054.5 658.8V662.5M1054.5 679.5V680.8" stroke="#86a2c6" stroke-width="1"/><rect x="1048.5" y="662.5" width="12" height="17" fill="#000" stroke="#86a2c6" stroke-width="1"/><path d="M1070.5 657.8V666.3M1070.5 669.5V674.5" stroke="#ff6a1f" stroke-width="1"/><rect x="1064.5" y="666.5" width="12" height="3" fill="#000" stroke="#ff6a1f" stroke-width="1"/><path d="M1086.5 658.8V680.8" stroke="#ff6a1f" stroke-width="1"/><rect x="1080" y="672.5" width="12.600" height="4.5" fill="#ff6a1f" shape-rendering="geometricPrecision"/><path d="M1101.5 648.3V652.5" stroke="#86a2c6" stroke-width="1"/><rect x="1095.5" y="652.5" width="12" height="19" fill="#000" stroke="#86a2c6" stroke-width="1"/><path d="M1117.5 650.0V658.3" stroke="#ff6a1f" stroke-width="1"/><rect x="1111" y="652" width="13" height="1" fill="#ff6a1f"/><path d="M1132.5 653.3V656.3M1132.5 668.3V671.2" stroke="#ff6a1f" stroke-width="1"/><rect x="1126.5" y="656.5" width="12" height="11" fill="#000" stroke="#ff6a1f" stroke-width="1"/><path d="M1148.5 641.2V662.5" stroke="#ff6a1f" stroke-width="1"/><rect x="1142" y="652.5" width="12.600" height="5.8" fill="#ff6a1f" shape-rendering="geometricPrecision"/><path d="M1163.5 660.0V668.3" stroke="#ff6a1f" stroke-width="1"/><rect x="1157" y="661.2" width="12.600" height="3.5" fill="#ff6a1f" shape-rendering="geometricPrecision"/><rect x="1173.5" y="633.5" width="12" height="9" fill="#000" stroke="#86a2c6" stroke-width="1"/><path d="M1194.5 613.7V633.3" stroke="#ff6a1f" stroke-width="1"/><rect x="1188" y="625.0" width="12.600" height="8.3" fill="#ff6a1f" shape-rendering="geometricPrecision"/><rect x="1204.5" y="605.5" width="12" height="21" fill="#000" stroke="#86a2c6" stroke-width="1"/><path d="M1225.5 597.5V599.2M1225.5 610.5V613.7" stroke="#86a2c6" stroke-width="1"/><rect x="1219.5" y="599.5" width="12" height="10" fill="#000" stroke="#86a2c6" stroke-width="1"/><path d="M1241.5 588.3V596.7M1241.5 601.7V605.8" stroke="#86a2c6" stroke-width="1"/><rect x="1235.5" y="597.5" width="12" height="4" fill="#000" stroke="#86a2c6" stroke-width="1"/><path d="M1256.5 597.5V615.8" stroke="#ff6a1f" stroke-width="1"/><rect x="1250" y="605" width="13" height="1" fill="#ff6a1f"/><path d="M1272.5 600.8V604.2" stroke="#86a2c6" stroke-width="1"/><rect x="1266.5" y="604.5" width="12" height="5" fill="#000" stroke="#86a2c6" stroke-width="1"/><rect x="1281" y="611.3" width="12.600" height="13.4" fill="#ff6a1f" shape-rendering="geometricPrecision"/><rect x="1297" y="637.5" width="12.600" height="22.2" fill="#ff6a1f" shape-rendering="geometricPrecision"/><path d="M1318.5 651.2V665.0" stroke="#ff6a1f" stroke-width="1"/><rect x="1312" y="661" width="13" height="1" fill="#ff6a1f"/><path d="M1334.5 651.7V659.2" stroke="#86a2c6" stroke-width="1"/><rect x="1328.5" y="659.5" width="12" height="4" fill="#000" stroke="#86a2c6" stroke-width="1"/><rect x="1344.5" y="637.5" width="12" height="16" fill="#000" stroke="#86a2c6" stroke-width="1"/><rect x="1359" y="636.2" width="12.600" height="53.5" fill="#ff6a1f" shape-rendering="geometricPrecision"/><path d="M1381.5 687.2V704.7" stroke="#ff6a1f" stroke-width="1"/><rect x="1375" y="698" width="13" height="1" fill="#ff6a1f"/><path d="M1396.5 696.3V724.7" stroke="#ff6a1f" stroke-width="1"/><rect x="1390" y="696.3" width="12.600" height="20.9" fill="#ff6a1f" shape-rendering="geometricPrecision"/><rect x="1406" y="711.3" width="12.600" height="17.0" fill="#ff6a1f" shape-rendering="geometricPrecision"/><path d="M1427.5 736.3V748.3" stroke="#86a2c6" stroke-width="1"/><rect x="1421.5" y="724.5" width="12" height="11" fill="#000" stroke="#86a2c6" stroke-width="1"/><path d="M1443.5 705.0V747.0" stroke="#ff6a1f" stroke-width="1"/><rect x="1437" y="713.8" width="12.600" height="25.7" fill="#ff6a1f" shape-rendering="geometricPrecision"/><path d="M1458.5 733.3V754.7" stroke="#ff6a1f" stroke-width="1"/><rect x="1452" y="737.2" width="12.600" height="8.6" fill="#ff6a1f" shape-rendering="geometricPrecision"/><rect x="1468.5" y="719.5" width="12" height="27" fill="#000" stroke="#86a2c6" stroke-width="1"/><path d="M1489.5 728.3V732.5" stroke="#86a2c6" stroke-width="1"/><rect x="1483.5" y="709.5" width="12" height="18" fill="#000" stroke="#86a2c6" stroke-width="1"/><path d="M1505.5 682.2V686.3" stroke="#86a2c6" stroke-width="1"/><rect x="1499.5" y="686.5" width="12" height="16" fill="#000" stroke="#86a2c6" stroke-width="1"/><path d="M1520.5 666.7V670.3" stroke="#86a2c6" stroke-width="1"/><rect x="1514.5" y="670.5" width="12" height="9" fill="#000" stroke="#86a2c6" stroke-width="1"/><path d="M1536.5 697.2V740.8" stroke="#ff6a1f" stroke-width="1"/><rect x="1530" y="697.2" width="12.600" height="40.0" fill="#ff6a1f" shape-rendering="geometricPrecision"/><path d="M1551.5 725.8V744.7" stroke="#86a2c6" stroke-width="1"/><rect x="1545" y="732.5" width="12.600" height="2.5" fill="#86a2c6" shape-rendering="geometricPrecision"/><path d="M1567.5 727.2V753.8" stroke="#ff6a1f" stroke-width="1"/><rect x="1561" y="737.2" width="12.600" height="11.1" fill="#ff6a1f" shape-rendering="geometricPrecision"/><path d="M1582.5 756.2V773.3" stroke="#ff6a1f" stroke-width="1"/><rect x="1576" y="756.2" width="12.600" height="3.5" fill="#ff6a1f" shape-rendering="geometricPrecision"/><path d="M1598.5 769.2V772.0" stroke="#86a2c6" stroke-width="1"/><rect x="1592.5" y="750.5" width="12" height="18" fill="#000" stroke="#86a2c6" stroke-width="1"/><path d="M1614.5 758.7V776.7" stroke="#ff6a1f" stroke-width="1"/><rect x="1608" y="758.7" width="12.600" height="7.1" fill="#ff6a1f" shape-rendering="geometricPrecision"/><path d="M1629.5 747.2V790.8" stroke="#ff6a1f" stroke-width="1"/><rect x="1623" y="760.0" width="12.600" height="30.8" fill="#ff6a1f" shape-rendering="geometricPrecision"/><path d="M1645.5 790.8V805.8" stroke="#ff6a1f" stroke-width="1"/><rect x="1639" y="793.3" width="12.600" height="10.0" fill="#ff6a1f" shape-rendering="geometricPrecision"/><path d="M1660.5 815.0V845.0" stroke="#ff6a1f" stroke-width="1"/><rect x="1654" y="815.0" width="12.600" height="12.2" fill="#ff6a1f" shape-rendering="geometricPrecision"/><path d="M1676.5 819.7V846.2" stroke="#ff6a1f" stroke-width="1"/><rect x="1670" y="832.2" width="12.600" height="9.8" fill="#ff6a1f" shape-rendering="geometricPrecision"/><path d="M1691.5 818.3V855.0" stroke="#ff6a1f" stroke-width="1"/><rect x="1685" y="830.0" width="12.600" height="15.0" fill="#ff6a1f" shape-rendering="geometricPrecision"/><rect x="1701.5" y="816.5" width="12" height="28" fill="#000" stroke="#86a2c6" stroke-width="1"/><polyline points="30.1,619.0 45.6,671.7 61.1,658.3 76.7,606.7 92.2,689.2 107.7,676.7 123.2,656.7 138.8,599.0 154.3,686.7 169.8,692.5 185.4,754.2 200.9,731.7 216.4,758.0 232.0,758.0 247.5,705.8 263.0,718.0 278.6,680.8 294.1,768.3 309.6,770.5 325.1,767.5 340.7,726.7 356.2,749.2 371.7,730.0 387.3,691.7 402.8,649.7 418.3,670.0 433.9,690.5 449.4,652.5 464.9,686.7 480.4,677.0 496.0,660.5 511.5,678.3 527.0,721.7 542.6,776.7 558.1,843.3 573.6,830.8 589.1,798.3 604.7,864.2 620.2,851.7 635.7,802.5 651.3,810.8 666.8,795.8 682.3,742.2 697.9,752.5 713.4,797.5 728.9,796.5 744.5,807.5 760.0,785.8 775.5,786.7 791.0,779.2 806.6,752.5 822.1,760.0 837.6,779.2 853.2,793.3 868.7,800.8 884.2,803.7 899.8,764.2 915.3,786.7 930.8,738.3 946.3,730.0 961.9,716.7 977.4,740.5 992.9,735.8 1008.5,756.7 1024.0,702.5 1039.5,685.0 1055.0,662.8 1070.6,676.7 1086.1,690.3 1101.6,655.3 1117.2,659.2 1132.7,665.3 1148.2,666.2 1163.8,674.2 1179.3,627.8 1194.8,634.2 1210.3,604.5 1225.9,601.7 1241.4,601.7 1256.9,620.0 1272.5,611.7 1288.0,634.2 1303.5,680.3 1319.1,675.0 1334.6,665.8 1350.1,635.8 1365.6,711.3 1381.2,720.0 1396.7,734.2 1412.2,742.2 1427.8,735.3 1443.3,753.3 1458.8,760.5 1474.4,723.7 1489.9,714.2 1505.4,685.0 1520.9,673.0 1536.5,767.5 1552.0,748.8 1567.5,763.3 1583.1,775.8 1598.6,757.5 1614.1,775.8 1629.7,807.2 1645.2,820.8 1660.7,848.3 1676.2,859.2 1691.8,857.5 1707.3,820.8" fill="none" stroke="#28c028" stroke-width="1.05" /><polyline points="30.1,590.0 45.6,640.8 61.1,630.0 76.7,577.5 92.2,655.8 107.7,645.0 123.2,626.7 138.8,566.0 154.3,652.5 169.8,660.0 185.4,716.7 200.9,698.0 216.4,728.0 232.0,726.3 247.5,676.7 263.0,692.5 278.6,659.2 294.1,745.0 309.6,747.5 325.1,738.7 340.7,696.7 356.2,724.7 371.7,705.0 387.3,670.0 402.8,626.7 418.3,649.0 433.9,665.8 449.4,627.5 464.9,664.7 480.4,655.8 496.0,639.2 511.5,660.5 527.0,708.3 542.6,753.3 558.1,819.2 573.6,806.7 589.1,771.7 604.7,835.8 620.2,826.7 635.7,779.5 651.3,786.7 666.8,775.0 682.3,720.5 697.9,735.0 713.4,775.8 728.9,777.5 744.5,786.7 760.0,762.8 775.5,765.0 791.0,756.7 806.6,732.8 822.1,741.2 837.6,763.3 853.2,779.2 868.7,784.2 884.2,786.7 899.8,745.5 915.3,766.3 930.8,715.0 946.3,711.7 961.9,696.3 977.4,720.0 992.9,718.8 1008.5,739.2 1024.0,685.0 1039.5,669.2 1055.0,642.8 1070.6,657.5 1086.1,671.2 1101.6,638.8 1117.2,645.5 1132.7,651.7 1148.2,652.8 1163.8,662.2 1179.3,616.7 1194.8,620.5 1210.3,591.7 1225.9,587.8 1241.4,586.3 1256.9,605.3 1272.5,599.2 1288.0,623.3 1303.5,666.7 1319.1,660.8 1334.6,651.7 1350.1,621.7 1365.6,691.7 1381.2,701.2 1396.7,712.5 1412.2,720.0 1427.8,716.7 1443.3,730.8 1458.8,739.2 1474.4,701.7 1489.9,691.3 1505.4,668.3 1520.9,655.5 1536.5,747.5 1552.0,730.5 1567.5,743.3 1583.1,754.7 1598.6,741.7 1614.1,763.3 1629.7,790.0 1645.2,804.2 1660.7,827.2 1676.2,835.8 1691.8,836.7 1707.3,797.5" fill="none" stroke="#ff0000" stroke-width="1.05" /><path d="M1407 649h9v16h7l-11.500 12.500L1399 665h8z" fill="#ff0000"/><rect x="1704.500" y="872" width="5" height="22" fill="#ffff00"/><rect x="1693" y="860" width="26" height="13" fill="#ffff00"/><text x="1706" y="870.500" text-anchor="middle" font-family="Liberation Sans,sans-serif" font-size="9.500" fill="#000" letter-spacing="0.600">EXIT</text><path d="M1707.500 860V873" stroke="#e8e000" stroke-width="1.600"/></g><path d="M1854.5 537V893.5" stroke="#fff" stroke-width="1.300"/><path d="M1854.5 890.5h4.5M1854.5 886.5h4.5M1854.5 882.5h4.5M1854.5 879.5h4.5M1854.5 875.5h4.5M1854.5 871.5h4.5M1854.5 867.5h4.5M1854.5 863.5h4.5M1854.5 860.5h4.5M1854.5 856.5h4.5M1854.5 852.5h4.5M1854.5 848.5h4.5M1854.5 844.5h4.5M1854.5 841.5h4.5M1854.5 837.5h4.5M1854.5 833.5h4.5M1854.5 829.5h4.5M1854.5 825.5h4.5M1854.5 822.5h4.5M1854.5 818.5h4.5M1854.5 814.5h4.5M1854.5 810.5h4.5M1854.5 806.5h4.5M1854.5 803.5h4.5M1854.5 799.5h4.5M1854.5 795.5h4.5M1854.5 791.5h4.5M1854.5 787.5h4.5M1854.5 784.5h4.5M1854.5 780.5h4.5M1854.5 776.5h4.5M1854.5 772.5h4.5M1854.5 769.5h4.5M1854.5 765.5h4.5M1854.5 761.5h4.5M1854.5 757.5h4.5M1854.5 753.5h4.5M1854.5 750.5h4.5M1854.5 746.5h4.5M1854.5 742.5h4.5M1854.5 738.5h4.5M1854.5 734.5h4.5M1854.5 731.5h4.5M1854.5 727.5h4.5M1854.5 723.5h4.5M1854.5 719.5h4.5M1854.5 715.5h4.5M1854.5 712.5h4.5M1854.5 708.5h4.5M1854.5 704.5h4.5M1854.5 700.5h4.5M1854.5 696.5h4.5M1854.5 693.5h4.5M1854.5 689.5h4.5M1854.5 685.5h4.5M1854.5 681.5h4.5M1854.5 677.5h4.5M1854.5 674.5h4.5M1854.5 670.5h4.5M1854.5 666.5h4.5M1854.5 662.5h4.5M1854.5 659.5h4.5M1854.5 655.5h4.5M1854.5 651.5h4.5M1854.5 647.5h4.5M1854.5 643.5h4.5M1854.5 640.5h4.5M1854.5 636.5h4.5M1854.5 632.5h4.5M1854.5 628.5h4.5M1854.5 624.5h4.5M1854.5 621.5h4.5M1854.5 617.5h4.5M1854.5 613.5h4.5M1854.5 609.5h4.5M1854.5 605.5h4.5M1854.5 602.5h4.5M1854.5 598.5h4.5M1854.5 594.5h4.5M1854.5 590.5h4.5M1854.5 586.5h4.5M1854.5 583.5h4.5M1854.5 579.5h4.5M1854.5 575.5h4.5M1854.5 571.5h4.5M1854.5 567.5h4.5M1854.5 564.5h4.5M1854.5 560.5h4.5M1854.5 556.5h4.5M1854.5 552.5h4.5M1854.5 549.5h4.5M1854.5 545.5h4.5M1854.5 541.5h4.5M1854.5 537.5h4.5" stroke="#fff" stroke-width="1"/><path d="M1854.5 882.5h10.5M1854.5 863.5h10.5M1854.5 844.5h10.5M1854.5 825.5h10.5M1854.5 806.5h10.5M1854.5 787.5h10.5M1854.5 769.5h10.5M1854.5 750.5h10.5M1854.5 731.5h10.5M1854.5 712.5h10.5M1854.5 693.5h10.5M1854.5 674.5h10.5M1854.5 655.5h10.5M1854.5 636.5h10.5M1854.5 617.5h10.5M1854.5 598.5h10.5M1854.5 579.5h10.5M1854.5 560.5h10.5M1854.5 541.5h10.5" stroke="#fff" stroke-width="1"/><text class="axl" x="1911.8" y="889.5" text-anchor="end">3550</text><text class="axl" x="1911.8" y="870.5" text-anchor="end">3600</text><text class="axl" x="1911.8" y="851.5" text-anchor="end">3650</text><text class="axl" x="1911.8" y="832.6" text-anchor="end">3700</text><text class="axl" x="1911.8" y="794.6" text-anchor="end">3800</text><text class="axl" x="1911.8" y="775.7" text-anchor="end">3850</text><text class="axl" x="1911.8" y="756.7" text-anchor="end">3900</text><text class="axl" x="1911.8" y="737.8" text-anchor="end">3950</text><text class="axl" x="1911.8" y="718.8" text-anchor="end">4000</text><text class="axl" x="1911.8" y="699.8" text-anchor="end">4050</text><text class="axl" x="1911.8" y="680.9" text-anchor="end">4100</text><text class="axl" x="1911.8" y="661.9" text-anchor="end">4150</text><text class="axl" x="1911.8" y="642.9" text-anchor="end">4200</text><text class="axl" x="1911.8" y="624.0" text-anchor="end">4250</text><text class="axl" x="1911.8" y="605.0" text-anchor="end">4300</text><text class="axl" x="1911.8" y="586.0" text-anchor="end">4350</text><text class="axl" x="1911.8" y="567.1" text-anchor="end">4400</text><rect x="1860.500" y="804.500" width="58" height="20.500" fill="#000" stroke="#fff" stroke-width="1.300"/><text x="1862.500" y="819.500" font-family="Liberation Sans,sans-serif" font-size="14.300" fill="#00d000" letter-spacing="-0.550">3727.510</text><path d="M37 901.500H1854.5M37 922H1854.5" stroke="#fff" stroke-width="1.300"/><path d="M107.5 902V922M185.5 902V922M263.5 902V922M340.5 902V922M418.5 902V922M480.5 902V922M558.5 902V922M635.5 902V922M697.5 902V922M775.5 902V922M837.5 902V922M915.5 902V922M992.5 902V922M1070.5 902V922M1148.5 902V922M1225.5 902V922M1303.5 902V922M1381.5 902V922M1458.5 902V922M1520.5 902V922M1598.5 902V922M1676.5 902V922M1753.5 902V922M1831.5 902V922M759.5 902V922M1427.5 902V922M107.5 922V941.500M433.5 922V941.500M759.5 922V941.500M1070.5 922V941.500M1427.5 922V941.500M1753.5 922V941.500" stroke="#fff" stroke-width="1.300"/><g clip-path="url(#cp5)"><text class="axl" x="32.6" y="916.500">25</text><text class="axl" x="110.2" y="916.500">2</text><text class="axl" x="187.9" y="916.500">9</text><text class="axl" x="265.5" y="916.500">16</text><text class="axl" x="343.2" y="916.500">23</text><text class="axl" x="420.8" y="916.500">31</text><text class="axl" x="482.9" y="916.500">6</text><text class="axl" x="560.6" y="916.500">13</text><text class="axl" x="638.2" y="916.500">21</text><text class="axl" x="700.4" y="916.500">27</text><text class="axl" x="778.0" y="916.500">5</text><text class="axl" x="840.1" y="916.500">11</text><text class="axl" x="917.8" y="916.500">18</text><text class="axl" x="995.4" y="916.500">25</text><text class="axl" x="1073.1" y="916.500">1</text><text class="axl" x="1150.7" y="916.500">8</text><text class="axl" x="1228.4" y="916.500">15</text><text class="axl" x="1306.0" y="916.500">22</text><text class="axl" x="1383.7" y="916.500">29</text><text class="axl" x="1461.3" y="916.500">6</text><text class="axl" x="1523.4" y="916.500">12</text><text class="axl" x="1601.1" y="916.500">19</text><text class="axl" x="1678.7" y="916.500">26</text><text class="axl" x="1756.4" y="916.500">3</text><text class="axl" x="1834.0" y="916.500">10</text><text class="axl" x="110.2" y="936.500">May</text><text class="axl" x="436.4" y="936.500">June</text><text class="axl" x="762.5" y="936.500">July</text><text class="axl" x="1073.1" y="936.500">August</text><text class="axl" x="1430.3" y="936.500">September</text><text class="axl" x="1756.4" y="936.500">October</text></g><rect x="1854.5" y="902" width="63.0" height="40" fill="#ececec"/><path d="M1855.0 942V904.500H1916.0" fill="none" stroke="#b4b4b4" stroke-width="1.500"/><circle cx="1884.500" cy="921" r="10" fill="none" stroke="#222" stroke-width="1.400" shape-rendering="geometricPrecision"/><circle cx="1881" cy="918" r="1.400" fill="#222"/><circle cx="1888" cy="918" r="1.400" fill="#222"/><path d="M1879.500 925.500h10" stroke="#222" stroke-width="1.400"/><rect x="37" y="941.500" width="1817.5" height="1" fill="#555"/></svg>
<div id="zoomrow" class="abs"><div class="abs" style="left:1420px;top:11px;width:184px;height:7px;background:#808080"></div><div class="abs" style="left:1629px;top:5px;width:1px;height:20px;background:#777"></div><div class="abs" style="left:1689px;top:5px;width:1px;height:20px;background:#777"></div><div class="abs" style="left:1801px;top:5px;width:1px;height:20px;background:#777"></div><svg style="left:1638px;top:5px" width="18" height="18"><path d="M3 8a6 6 0 0 1 10.500-3" fill="none" stroke="#555" stroke-width="2.600"/><path d="M15.500 1v6h-6z" fill="#555"/><path d="M15 10a6 6 0 0 1-10.500 3" fill="none" stroke="#555" stroke-width="2.600"/><path d="M2.500 17v-6h6z" fill="#555"/></svg><div class="abs" style="left:1667px;top:4px;font:bold 16px 'Liberation Sans',sans-serif;color:#555;line-height:20px">D</div><svg style="left:1700px;top:5px" width="10" height="18"><path d="M5 3v12" stroke="#555" stroke-width="2.200"/><path d="M5 0l4 5H1zM5 18l4-5H1z" fill="#555"/></svg><svg style="left:1722px;top:4px" width="20" height="20"><path d="M10 3v14M3 10h14" stroke="#555" stroke-width="2"/><path d="M10 0l3.500 4.500h-7zM10 20l3.500-4.500h-7zM0 10l4.500-3.500v7zM20 10l-4.500-3.500v7z" fill="#555"/></svg><svg style="left:1750px;top:6px" width="17" height="17"><circle cx="8.500" cy="8.500" r="6.800" fill="none" stroke="#555" stroke-width="1.400"/><path d="M5 8.500h7" stroke="#555" stroke-width="2"/></svg><svg style="left:1776px;top:6px" width="17" height="17"><circle cx="8.500" cy="8.500" r="6.800" fill="none" stroke="#555" stroke-width="1.400"/><path d="M5 8.500h7M8.500 5v7" stroke="#555" stroke-width="2"/></svg><svg style="left:1813px;top:8px" width="8" height="12"><path d="M7 0v12L0 6z" fill="#c8c8c8"/></svg><svg style="left:1841px;top:8px" width="8" height="12"><path d="M0 0v12l7-6z" fill="#c8c8c8"/></svg><svg style="left:1861px;top:6px" width="16" height="16"><rect x="1" y="1" width="14" height="14" fill="#f4f4f4" stroke="#555" stroke-width="1.400"/><path d="M1 4h14" stroke="#555" stroke-width="2"/><path d="M3 7.500h10M3 10h10M3 12.500h10" stroke="#555" stroke-width="1"/></svg></div><div id="btb" class="abs"></div><div id="btbL" class="abs"></div><div class="grip" style="left:0;top:975px;height:37px;width:9px"><i></i></div><div class="dd" style="left:10px;top:981px;width:163px"><b style="left:19px;width:101px"></b></div><svg style="left:154px;top:991px" width="10" height="6"><path d="M0.5 0.5 L5 5 L9.5 0.5" fill="none" stroke="#555" stroke-width="1.3"/></svg><div class="sep" style="left:175px;top:979px;height:29px"></div><div class="dd" style="left:180px;top:981px;width:125px"><b style="left:14px;width:74px"></b></div><svg style="left:288px;top:991px" width="10" height="6"><path d="M0.5 0.5 L5 5 L9.5 0.5" fill="none" stroke="#555" stroke-width="1.3"/></svg><div class="sep" style="left:313px;top:974px;height:38px"></div><div class="grip" style="left:321px;top:975px;height:37px;width:9px"><i></i></div><div class="abs" style="left:334.5px;top:980.5px;width:12.500px;height:12px;background:#e6e6fa;border:1px solid rgba(120,120,120,.45)"></div><div class="abs" style="left:349.5px;top:980.5px;width:12.500px;height:12px;background:#ffd700;border:1px solid rgba(120,120,120,.45)"></div><div class="abs" style="left:364.5px;top:980.5px;width:12.500px;height:12px;background:#ffff00;border:1px solid rgba(120,120,120,.45)"></div><div class="abs" style="left:379.5px;top:980.5px;width:12.500px;height:12px;background:#696969;border:1px solid rgba(120,120,120,.45)"></div><div class="abs" style="left:394.5px;top:980.5px;width:12.500px;height:12px;background:#32cd32;border:1px solid rgba(120,120,120,.45)"></div><div class="abs" style="left:409.5px;top:980.5px;width:12.500px;height:12px;background:#ffffe0;border:1px solid rgba(120,120,120,.45)"></div><div class="abs" style="left:424.5px;top:980.5px;width:12.500px;height:12px;background:#ff6a1f;border:1px solid rgba(120,120,120,.45)"></div><div class="abs" style="left:439.5px;top:980.5px;width:12.500px;height:12px;background:#98fb98;border:1px solid rgba(120,120,120,.45)"></div><div class="abs" style="left:334.5px;top:995.5px;width:12.500px;height:12px;background:#8b0000;border:1px solid rgba(120,120,120,.45);"></div><div class="abs" style="left:349.5px;top:995.5px;width:12.500px;height:12px;background:#6a8593;border:1px solid rgba(120,120,120,.45);"></div><div class="abs" style="left:364.5px;top:995.5px;width:12.500px;height:12px;background:#0000ff;border:1px solid rgba(120,120,120,.45);"></div><div class="abs" style="left:379.5px;top:995.5px;width:12.500px;height:12px;background:#008c00;border:1px solid rgba(120,120,120,.45);"></div><div class="abs" style="left:394.5px;top:995.5px;width:12.500px;height:12px;background:#ff0000;border:1px dotted #fff;outline:1px solid #ccc;"></div><div class="abs" style="left:409.5px;top:995.5px;width:12.500px;height:12px;background:#000000;border:1px solid rgba(120,120,120,.45);"></div><div class="abs" style="left:424.5px;top:995.5px;width:12.500px;height:12px;background:#3a7ca5;border:1px solid rgba(120,120,120,.45);"></div><div class="abs" style="left:439.5px;top:995.5px;width:12.500px;height:12px;background:#8fd3e4;border:1px solid rgba(120,120,120,.45);"></div><svg style="left:454px;top:991px" width="8" height="5"><path d="M0 0h8L4 4.500z" fill="#111"/></svg><div class="sep" style="left:474px;top:974px;height:38px"></div><div class="grip" style="left:482px;top:975px;height:37px;width:9px"><i></i></div><svg style="left:498.0px;top:986px" width="22" height="17"><rect x="0.500" y="1.500" width="17" height="13" fill="#fafafa" stroke="#6a8ab0" stroke-width="1"/><path d="M0.500 2h17" stroke="#6a8ab0" stroke-width="1.500" stroke-dasharray="1.500 1"/><path d="M3 11l4-4 3 2.500" fill="none" stroke="#d33" stroke-width="1.200"/><text x="11" y="13.500" font-size="10" fill="#333" font-family="Liberation Sans,sans-serif">1</text></svg><svg style="left:531.8px;top:986px" width="22" height="17"><rect x="0.500" y="1.500" width="17" height="13" fill="#fafafa" stroke="#6a8ab0" stroke-width="1"/><path d="M0.500 2h17" stroke="#6a8ab0" stroke-width="1.500" stroke-dasharray="1.500 1"/><path d="M3 11l4-4 3 2.500" fill="none" stroke="#d33" stroke-width="1.200"/><text x="11" y="13.500" font-size="10" fill="#333" font-family="Liberation Sans,sans-serif">2</text></svg><svg style="left:565.6px;top:986px" width="22" height="17"><rect x="0.500" y="1.500" width="17" height="13" fill="#fafafa" stroke="#6a8ab0" stroke-width="1"/><path d="M0.500 2h17" stroke="#6a8ab0" stroke-width="1.500" stroke-dasharray="1.500 1"/><path d="M3 11l4-4 3 2.500" fill="none" stroke="#d33" stroke-width="1.200"/><text x="11" y="13.500" font-size="10" fill="#333" font-family="Liberation Sans,sans-serif">3</text></svg><svg style="left:599.4px;top:986px" width="22" height="17"><rect x="0.500" y="1.500" width="17" height="13" fill="#fafafa" stroke="#6a8ab0" stroke-width="1"/><path d="M0.500 2h17" stroke="#6a8ab0" stroke-width="1.500" stroke-dasharray="1.500 1"/><path d="M3 11l4-4 3 2.500" fill="none" stroke="#d33" stroke-width="1.200"/><text x="11" y="13.500" font-size="10" fill="#333" font-family="Liberation Sans,sans-serif">4</text></svg><svg style="left:633.2px;top:986px" width="22" height="17"><rect x="0.500" y="1.500" width="17" height="13" fill="#fafafa" stroke="#6a8ab0" stroke-width="1"/><path d="M0.500 2h17" stroke="#6a8ab0" stroke-width="1.500" stroke-dasharray="1.500 1"/><path d="M3 11l4-4 3 2.500" fill="none" stroke="#d33" stroke-width="1.200"/><text x="11" y="13.500" font-size="10" fill="#333" font-family="Liberation Sans,sans-serif">5</text></svg><svg style="left:667.0px;top:986px" width="22" height="17"><rect x="0.500" y="1.500" width="17" height="13" fill="#fafafa" stroke="#6a8ab0" stroke-width="1"/><path d="M0.500 2h17" stroke="#6a8ab0" stroke-width="1.500" stroke-dasharray="1.500 1"/><path d="M3 11l4-4 3 2.500" fill="none" stroke="#d33" stroke-width="1.200"/><text x="11" y="13.500" font-size="10" fill="#333" font-family="Liberation Sans,sans-serif">6</text></svg><div id="strip" class="abs"></div><div class="abs" style="left:1840px;top:1017px;width:25px;height:3px;background:#fdfdfd"></div><div class="abs" style="left:1850px;top:1018.500px;width:5px;height:1.500px;background:#3cb83c"></div><div class="abs" style="left:1869.500px;top:1016.500px;width:26.500px;height:3.500px;background:#f2f2f2;border:1px solid #d0d0d0;border-bottom:0"></div><div class="abs" style="left:1879px;top:1018px;width:8px;height:2px;background:#b8c4dc"></div>
<div id="task" class="abs"><svg style="left:26px;top:14px" width="32" height="28"><circle cx="22" cy="9.500" r="7.500" fill="#f5a623"/><circle cx="20.500" cy="8" r="4.500" fill="#ffc94d"/><path d="M6.500 25.500a5.800 5.800 0 0 1 .6-11.500 7.500 7.500 0 0 1 13.400-1 6 6 0 0 1 3.500 12.500z" fill="#e3ebf5"/><path d="M6.500 25.500a5.800 5.800 0 0 1-4-2.500h25.500a6 6 0 0 1-4 2.500z" fill="#b4c8de"/></svg><div class="abs w1">21°C</div><div class="abs w2">Ger. Nublado</div><svg style="left:505.5px;top:15.0px" width="30" height="30" viewBox="0 0 30 30"><defs><linearGradient id="sg" x1="0" y1="0" x2="1" y2="1"><stop offset="0" stop-color="#6fdcff"/><stop offset="1" stop-color="#1b9be8"/></linearGradient></defs><rect x="0" y="0" width="14.200" height="14.200" rx="1" fill="url(#sg)"/><rect x="15.800" y="0" width="14.200" height="14.200" rx="1" fill="url(#sg)"/><rect x="0" y="15.800" width="14.200" height="14.200" rx="1" fill="url(#sg)"/><rect x="15.800" y="15.800" width="14.200" height="14.200" rx="1" fill="url(#sg)"/></svg><svg style="left:561.0px;top:15.0px" width="30" height="30" viewBox="0 0 30 30"><circle cx="17" cy="12.500" r="9.500" fill="#4a4850" stroke="#f2f2f2" stroke-width="3"/><path d="M10 20.500l-6.500 7.500" stroke="#e8e8e8" stroke-width="3.400" stroke-linecap="round"/></svg><svg style="left:615.0px;top:15.0px" width="30" height="30" viewBox="0 0 30 30"><defs><linearGradient id="cg" x1="0" y1="0" x2="1" y2="1"><stop offset="0" stop-color="#8f8ae8"/><stop offset="1" stop-color="#5a4fc4"/></linearGradient></defs><circle cx="15.500" cy="14.500" r="14" fill="url(#cg)"/><path d="M3 22l-1.500 7.500 8-3z" fill="#6a60d0"/><rect x="7.500" y="9.500" width="12" height="10" rx="2" fill="#fff"/><path d="M20 13.500l4.500-3v8.500l-4.500-3z" fill="#fff"/></svg><svg style="left:671.5px;top:16.0px" width="28" height="28" viewBox="0 0 28 28"><rect x="11" y="3.500" width="16" height="21" fill="#fff" stroke="#2b579a" stroke-width="1"/><path d="M14 8h11M14 11h11M14 14h11M14 17h11M14 20h11" stroke="#2b579a" stroke-width="1.300"/><path d="M0 3.500L16 0.500v27L0 24.500z" fill="#2b579a"/><text x="8" y="19.500" text-anchor="middle" font-family="Liberation Sans,sans-serif" font-weight="bold" font-size="14" fill="#fff">W</text></svg><svg style="left:725.5px;top:15.0px" width="30" height="30" viewBox="0 0 30 30"><defs><linearGradient id="mg740" x1="0" y1="0" x2="0" y2="1"><stop offset="0" stop-color="#555"/><stop offset="0.450" stop-color="#111"/><stop offset="1" stop-color="#000"/></linearGradient></defs><rect x="0" y="0" width="30" height="30" rx="3" fill="url(#mg740)"/><path d="M9 27V17.500h2.800V27zM13.500 27V11h3V27z" fill="#f08a24"/><path d="M18.200 27L20.500 3h3L21.400 27z" fill="#f07a20"/></svg><svg style="left:781.0px;top:17.0px" width="30" height="26" viewBox="0 0 30 26"><path d="M1 3a2 2 0 0 1 2-2h8l3 3.500h13a2 2 0 0 1 2 2V9H1z" fill="#e8a600"/><rect x="1" y="6" width="28" height="19.500" rx="1.500" fill="#ffd75e"/><rect x="1" y="15" width="28" height="10.500" rx="1.500" fill="#f9c73c"/><rect x="7" y="19" width="16" height="6.500" rx="1.500" fill="#1f86d8"/><rect x="9" y="21" width="12" height="2" fill="#5cb4f4"/></svg><svg style="left:835.0px;top:15.0px" width="30" height="30" viewBox="0 0 30 30"><circle cx="15" cy="15" r="14" fill="#db4437"/><path d="M15 15L2.900 8A14 14 0 0 0 8.500 27.400z" fill="#0f9d58"/><path d="M15 15L2.900 8A14 14 0 0 0 15 29L21.500 18z" fill="#0f9d58"/><path d="M15 15L27.100 8A14 14 0 0 1 15 29L21.600 18.800z" fill="#ffcd40"/><path d="M15 15h13.500A14 14 0 0 1 15 29z" fill="#ffcd40"/><path d="M15 1A14 14 0 0 1 27.200 8.200H15z" fill="#db4437"/><circle cx="15" cy="15" r="6.600" fill="#fff"/><circle cx="15" cy="15" r="5.200" fill="#4285f4"/></svg><svg style="left:852px;top:9px" width="20" height="20"><circle cx="10" cy="10" r="9.500" fill="#f37a1f"/><text x="10" y="14" text-anchor="middle" font-family="Liberation Sans,sans-serif" font-weight="bold" font-size="10.500" fill="#fff">N</text></svg><svg style="left:892.0px;top:16.0px" width="28" height="28" viewBox="0 0 28 28"><rect x="11" y="3.500" width="16" height="21" fill="#fff" stroke="#d24726" stroke-width="1"/><path d="M14 8h11M14 11h11M14 14h11M14 17h11M14 20h11" stroke="#d24726" stroke-width="1.300"/><path d="M0 3.500L16 0.500v27L0 24.500z" fill="#d24726"/><text x="8" y="19.500" text-anchor="middle" font-family="Liberation Sans,sans-serif" font-weight="bold" font-size="14" fill="#fff">P</text></svg><svg style="left:948.0px;top:15.0px" width="26" height="30" viewBox="0 0 26 30"><path d="M13 0.500c1.500 0 2 1 2.500 2.500l6.500 20H4L10.500 3c.5-1.500 1-2.500 2.500-2.500z" fill="#f48b00"/><path d="M9 8h8l1.500 4.500h-11zM6 17h14l1.300 4h-16.600z" fill="#f4f4f4"/><path d="M1.500 23.500h23l1 5.500H.5z" fill="#f48b00"/><path d="M.8 27.500h24.400l.3 1.500H.5z" fill="#c86400"/></svg><svg style="left:1000.5px;top:14.5px" width="31" height="31" viewBox="0 0 31 31"><defs><linearGradient id="eg1" x1="0" y1="0" x2="1" y2="1"><stop offset="0" stop-color="#35c1f1"/><stop offset="1" stop-color="#0c59a4"/></linearGradient><linearGradient id="eg2" x1="0" y1="0" x2="1" y2="0"><stop offset="0" stop-color="#2fc2df"/><stop offset="1" stop-color="#6edb4a"/></linearGradient></defs><circle cx="15.500" cy="15.500" r="15" fill="url(#eg1)"/><path d="M1 13C2.500 5 9 .5 15.500.5 24 .5 30.500 7 30.500 14c0 4-3 6.500-6.500 6.500-3 0-4-1.500-3.500-3 .5-1.200 1-2 1-3.500 0-3-3-5.500-6.500-5.500C9 8.500 3 10 1 13z" fill="url(#eg2)"/><path d="M9 17c0 6 5 11 11.500 11 2.500 0 5-1 6.500-2.500-2 4-6.500 5.500-10 5.500C9 31 4.500 25 4.500 19.500c0-3 1.500-5.500 4-7-.5 1.500.5 3 .5 4.500z" fill="#1567b8"/></svg><svg style="left:1057.0px;top:16.0px" width="28" height="28" viewBox="0 0 28 28"><rect x="11" y="3.500" width="16" height="21" fill="#fff" stroke="#3955a3" stroke-width="1"/><rect x="19" y="6" width="5" height="5" fill="none" stroke="#3955a3" stroke-width="1.300" transform="rotate(45 21.500 8.500)"/><rect x="17" y="15" width="4.500" height="4.500" fill="none" stroke="#3955a3" stroke-width="1.300"/><path d="M21.500 12v3" stroke="#3955a3" stroke-width="1.200"/><path d="M0 3.500L16 0.500v27L0 24.500z" fill="#3955a3"/><text x="8" y="19.500" text-anchor="middle" font-family="Liberation Sans,sans-serif" font-weight="bold" font-size="14" fill="#fff">V</text></svg><svg style="left:1111.5px;top:16.0px" width="28" height="28" viewBox="0 0 28 28"><rect x="11" y="3.500" width="16" height="21" fill="#fff" stroke="#1e7145" stroke-width="1"/><path d="M17 4v20M22 4v20M11 8h16M11 12h16M11 16h16M11 20h16" stroke="#1e7145" stroke-width="1.100"/><path d="M0 3.500L16 0.500v27L0 24.500z" fill="#1e7145"/><text x="8" y="19.500" text-anchor="middle" font-family="Liberation Sans,sans-serif" font-weight="bold" font-size="14" fill="#fff">X</text></svg><svg style="left:1165.5px;top:15.0px" width="30" height="30" viewBox="0 0 30 30"><circle cx="15" cy="15" r="14" fill="#db4437"/><path d="M15 15L2.900 8A14 14 0 0 0 8.500 27.400z" fill="#0f9d58"/><path d="M15 15L2.900 8A14 14 0 0 0 15 29L21.500 18z" fill="#0f9d58"/><path d="M15 15L27.100 8A14 14 0 0 1 15 29L21.600 18.800z" fill="#ffcd40"/><path d="M15 15h13.500A14 14 0 0 1 15 29z" fill="#ffcd40"/><path d="M15 1A14 14 0 0 1 27.200 8.200H15z" fill="#db4437"/><circle cx="15" cy="15" r="6.600" fill="#fff"/><circle cx="15" cy="15" r="5.200" fill="#4285f4"/></svg><svg style="left:1223.5px;top:15.0px" width="24" height="30" viewBox="0 0 24 30"><rect x="0.500" y="0.500" width="23" height="29" rx="2.500" fill="#6d7f92" stroke="#8a9bad"/><rect x="3" y="3" width="18" height="5.500" fill="#56c8f0"/><rect x="3.0" y="10.5" width="5" height="5" fill="#dfe6ec"/><rect x="3.0" y="16.7" width="5" height="5" fill="#dfe6ec"/><rect x="3.0" y="22.9" width="5" height="5" fill="#dfe6ec"/><rect x="9.3" y="10.5" width="5" height="5" fill="#dfe6ec"/><rect x="9.3" y="16.7" width="5" height="5" fill="#dfe6ec"/><rect x="9.3" y="22.9" width="5" height="5" fill="#dfe6ec"/><rect x="15.6" y="10.5" width="5" height="5" fill="#dfe6ec"/><rect x="15.6" y="16.7" width="5" height="5" fill="#1d4f91"/><rect x="15.6" y="22.9" width="5" height="5" fill="#1d4f91"/></svg><svg style="left:1276.0px;top:15.0px" width="30" height="30" viewBox="0 0 30 30"><rect x="0" y="0" width="30" height="30" fill="#0a8a8a"/><path d="M14.200 2.500h1.600v2.200h2v1.600h-2v2.500h-1.600V6.300h-2V4.700h2z" fill="#111"/><path d="M15 9c2 0 3.500 1.500 3.500 3.500 1.500-1.500 4-2 6-.5 2.500 2 2 5.500-.5 8l-1.500 2.500H7.500L6 20C3.500 17.500 3 14 5.500 12c2-1.500 4.500-1 6 .5C11.500 10.500 13 9 15 9z" fill="#fff" stroke="#111" stroke-width="1.100"/><path d="M7 22.500h16v5.500H7z" fill="#fff" stroke="#111" stroke-width="1.100"/><path d="M7.500 24.500h15M7.500 26.300h15" stroke="#111" stroke-width="0.900"/></svg><div class="abs" style="left:1320px;top:5px;width:51px;height:50px;border-radius:5px;background:#35323d;border:1px solid #403d48"></div><svg style="left:1330.5px;top:15.0px" width="30" height="30" viewBox="0 0 30 30"><defs><linearGradient id="mg1345" x1="0" y1="0" x2="0" y2="1"><stop offset="0" stop-color="#555"/><stop offset="0.450" stop-color="#111"/><stop offset="1" stop-color="#000"/></linearGradient></defs><rect x="0" y="0" width="30" height="30" rx="3" fill="url(#mg1345)"/><path d="M9 27V17.500h2.800V27zM13.500 27V11h3V27z" fill="#f08a24"/><path d="M18.200 27L20.500 3h3L21.400 27z" fill="#f07a20"/></svg><div class="abs" style="left:1336px;top:50px;width:20px;height:3.500px;border-radius:2px;background:#4cc2ff"></div><svg style="left:1386.0px;top:15.0px" width="30" height="30" viewBox="0 0 30 30"><rect x="1" y="1" width="28" height="28" rx="3.500" fill="#241a22" stroke="#7a1528" stroke-width="1.600"/><text x="15" y="23" text-anchor="middle" font-family="Liberation Sans,sans-serif" font-size="14" fill="#c22040">Pro</text><path d="M19 4.500h6M22 3v3" stroke="#c22040" stroke-width="1"/></svg><div class="pill" style="left:681.5px"></div><div class="pill" style="left:846.5px"></div><div class="pill" style="left:1121.5px"></div><div class="pill" style="left:1396.5px"></div><svg style="left:1626px;top:25px" width="18" height="11"><path d="M1.500 9.500L9 2l7.500 7.500" fill="none" stroke="#fff" stroke-width="1.700"/></svg><svg style="left:1654px;top:19.500px" width="24" height="22"><path d="M5 15a4 4 0 0 1 .5-8 5.500 5.500 0 0 1 10.500 1 3.500 3.500 0 0 1 0 7z" fill="#c8c8c8"/><path d="M3 15a3 3 0 0 1 1-5.500 4.500 4.500 0 0 1 4-2.500" fill="#eee"/><circle cx="15.500" cy="15.500" r="5.300" fill="#e01b2f"/><path d="M13.300 13.300l4.400 4.400M17.700 13.300l-4.400 4.400" stroke="#fff" stroke-width="1.500"/></svg><svg style="left:1688px;top:19px" width="24" height="20"><path d="M2 7.500a14 14 0 0 1 20 0M5.500 11a9.200 9.200 0 0 1 13 0M8.800 14.300a4.600 4.600 0 0 1 6.400 0" fill="none" stroke="#fff" stroke-width="1.700"/><circle cx="12" cy="17.300" r="1.600" fill="#fff"/></svg><svg style="left:1718px;top:19px" width="24" height="20"><path d="M2 7.500h3.500L10 3.500v13L5.500 12.500H2z" fill="none" stroke="#fff" stroke-width="1.500" stroke-linejoin="round"/><path d="M13 7a4 4 0 0 1 0 6M15.500 4.500a7.500 7.500 0 0 1 0 11M18 2a11 11 0 0 1 0 16" fill="none" stroke="#fff" stroke-width="1.500"/></svg><svg style="left:1748px;top:20px" width="24" height="18"><rect x="5" y="4.500" width="15" height="10" rx="2" fill="none" stroke="#fff" stroke-width="1.600"/><rect x="20.500" y="7.500" width="2" height="4" fill="#fff"/><rect x="7" y="6.500" width="5" height="6" fill="#fff"/><path d="M2 1v3M5.500 1v3M1 4h5.500v2.500a2.700 2.700 0 0 1-5.500 0zM3.800 9v4h3" fill="none" stroke="#fff" stroke-width="1.400"/></svg><div class="abs clk">20:54</div><div class="abs dat">28/09/2022</div><div class="abs" style="left:1876px;top:20px;width:20px;height:20px;border-radius:10px;background:#4cc2ff;color:#000;font-size:13px;line-height:20px;text-align:center">1</div></div>
</body></html>
